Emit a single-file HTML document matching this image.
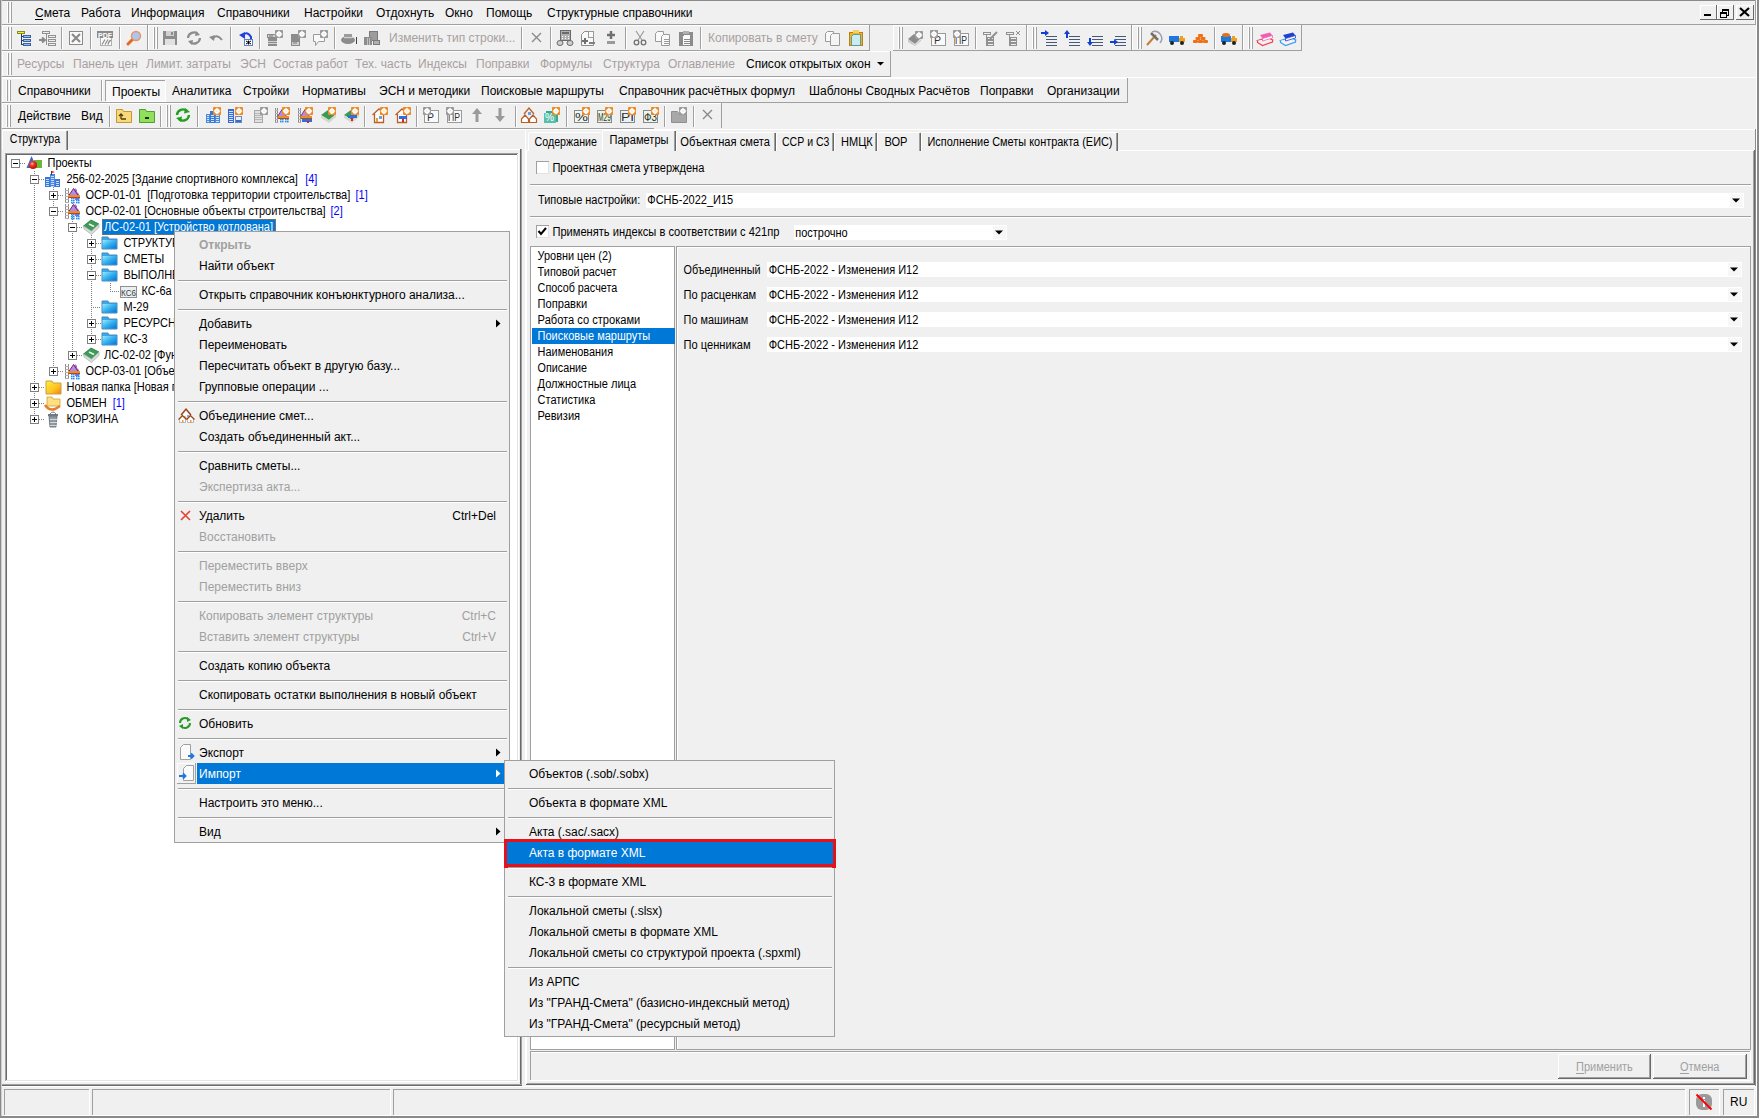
<!DOCTYPE html>
<html><head><meta charset="utf-8"><title>Smeta</title>
<style>html,body{margin:0;padding:0;background:#f0f0f0;overflow:hidden;width:1759px;height:1118px}svg{display:block;font-family:"Liberation Sans",sans-serif}text{white-space:pre}</style>
</head><body><svg width="1759" height="1118" viewBox="0 0 1759 1118"><defs><linearGradient id="gblue" x1="0" y1="0" x2="1" y2="1"><stop offset="0" stop-color="#9ee8ff"/><stop offset="0.5" stop-color="#30b0f0"/><stop offset="1" stop-color="#1070d0"/></linearGradient><linearGradient id="gyel" x1="0" y1="0" x2="1" y2="1"><stop offset="0" stop-color="#fff040"/><stop offset="0.6" stop-color="#ffc020"/><stop offset="1" stop-color="#f08010"/></linearGradient><radialGradient id="gred" cx="0.4" cy="0.35" r="0.7"><stop offset="0" stop-color="#ffb0a0"/><stop offset="0.4" stop-color="#f03020"/><stop offset="1" stop-color="#b01008"/></radialGradient></defs>
<rect x="0" y="0" width="1759" height="1118" fill="#f0f0f0" />
<rect x="0" y="0" width="1759" height="1" fill="#8a8a8a"/>
<rect x="0" y="0" width="1" height="1118" fill="#8a8a8a"/>
<rect x="1" y="0" width="1" height="1118" fill="#cfcfcf"/>
<rect x="1757" y="0" width="2" height="1118" fill="#8a8a8a"/>
<rect x="1756" y="0" width="1" height="1118" fill="#ffffff"/>
<rect x="0" y="1116" width="1759" height="2" fill="#8a8a8a"/>
<rect x="2" y="24" width="1754" height="1" fill="#a0a0a0"/>
<rect x="1755" y="0" width="1" height="25" fill="#a0a0a0"/>
<rect x="7" y="2" width="1" height="21" fill="#ffffff"/>
<rect x="10" y="2" width="1" height="21" fill="#ffffff"/>
<rect x="8" y="2" width="1" height="21" fill="#a0a0a0"/>
<rect x="11" y="2" width="1" height="21" fill="#a0a0a0"/>
<text x="35" y="17" font-size="12" fill="#000">Смета</text>
<text x="81" y="17" font-size="12" fill="#000">Работа</text>
<text x="131" y="17" font-size="12" fill="#000">Информация</text>
<text x="217" y="17" font-size="12" fill="#000">Справочники</text>
<text x="304" y="17" font-size="12" fill="#000">Настройки</text>
<text x="376" y="17" font-size="12" fill="#000">Отдохнуть</text>
<text x="445" y="17" font-size="12" fill="#000">Окно</text>
<text x="486" y="17" font-size="12" fill="#000">Помощь</text>
<text x="547" y="17" font-size="12" fill="#000">Структурные справочники</text>
<rect x="35" y="19" width="8" height="1" fill="#000"/>
<rect x="1700" y="5" width="17" height="1" fill="#ffffff"/>
<rect x="1700" y="5" width="1" height="15" fill="#ffffff"/>
<rect x="1700" y="19" width="17" height="1" fill="#696969"/>
<rect x="1716" y="5" width="1" height="15" fill="#696969"/>
<rect x="1717" y="5" width="17" height="1" fill="#ffffff"/>
<rect x="1717" y="5" width="1" height="15" fill="#ffffff"/>
<rect x="1717" y="19" width="17" height="1" fill="#696969"/>
<rect x="1733" y="5" width="1" height="15" fill="#696969"/>
<rect x="1736" y="5" width="18" height="1" fill="#ffffff"/>
<rect x="1736" y="5" width="1" height="15" fill="#ffffff"/>
<rect x="1736" y="19" width="18" height="1" fill="#696969"/>
<rect x="1753" y="5" width="1" height="15" fill="#696969"/>
<rect x="1704" y="14" width="7" height="2" fill="#000" />
<rect x="1722" y="9" width="7" height="1" fill="#000"/>
<rect x="1722" y="15" width="7" height="1" fill="#000"/>
<rect x="1722" y="9" width="1" height="7" fill="#000"/>
<rect x="1728" y="9" width="1" height="7" fill="#000"/>
<rect x="1722" y="10" width="7" height="1" fill="#000"/>
<rect x="1720" y="12" width="6" height="6" fill="#f0f0f0" />
<rect x="1720" y="12" width="7" height="1" fill="#000"/>
<rect x="1720" y="17" width="7" height="1" fill="#000"/>
<rect x="1720" y="12" width="1" height="6" fill="#000"/>
<rect x="1726" y="12" width="1" height="6" fill="#000"/>
<rect x="1720" y="13" width="7" height="1" fill="#000"/>
<path d="M1740 8 L1749 16 M1749 8 L1740 16" stroke="#000" stroke-width="2.2"/>
<rect x="2" y="25" width="146" height="1" fill="#ffffff"/>
<rect x="2" y="25" width="1" height="26" fill="#ffffff"/>
<rect x="2" y="50" width="146" height="1" fill="#a0a0a0"/>
<rect x="147" y="25" width="1" height="26" fill="#a0a0a0"/>
<rect x="7" y="27" width="1" height="22" fill="#ffffff"/>
<rect x="10" y="27" width="1" height="22" fill="#ffffff"/>
<rect x="8" y="27" width="1" height="22" fill="#a0a0a0"/>
<rect x="11" y="27" width="1" height="22" fill="#a0a0a0"/>
<rect x="61" y="27" width="1" height="22" fill="#a0a0a0"/>
<rect x="62" y="27" width="1" height="22" fill="#ffffff"/>
<rect x="90" y="27" width="1" height="22" fill="#a0a0a0"/>
<rect x="91" y="27" width="1" height="22" fill="#ffffff"/>
<rect x="119" y="27" width="1" height="22" fill="#a0a0a0"/>
<rect x="120" y="27" width="1" height="22" fill="#ffffff"/>
<rect x="148" y="25" width="722" height="1" fill="#ffffff"/>
<rect x="148" y="25" width="1" height="26" fill="#ffffff"/>
<rect x="148" y="50" width="722" height="1" fill="#a0a0a0"/>
<rect x="869" y="25" width="1" height="26" fill="#a0a0a0"/>
<rect x="153" y="27" width="1" height="22" fill="#ffffff"/>
<rect x="156" y="27" width="1" height="22" fill="#ffffff"/>
<rect x="154" y="27" width="1" height="22" fill="#a0a0a0"/>
<rect x="157" y="27" width="1" height="22" fill="#a0a0a0"/>
<rect x="230" y="27" width="1" height="22" fill="#a0a0a0"/>
<rect x="231" y="27" width="1" height="22" fill="#ffffff"/>
<rect x="259" y="27" width="1" height="22" fill="#a0a0a0"/>
<rect x="260" y="27" width="1" height="22" fill="#ffffff"/>
<rect x="334" y="27" width="1" height="22" fill="#a0a0a0"/>
<rect x="335" y="27" width="1" height="22" fill="#ffffff"/>
<rect x="521" y="27" width="1" height="22" fill="#a0a0a0"/>
<rect x="522" y="27" width="1" height="22" fill="#ffffff"/>
<rect x="550" y="27" width="1" height="22" fill="#a0a0a0"/>
<rect x="551" y="27" width="1" height="22" fill="#ffffff"/>
<rect x="625" y="27" width="1" height="22" fill="#a0a0a0"/>
<rect x="626" y="27" width="1" height="22" fill="#ffffff"/>
<rect x="700" y="27" width="1" height="22" fill="#a0a0a0"/>
<rect x="701" y="27" width="1" height="22" fill="#ffffff"/>
<text x="389" y="42" font-size="12" fill="#a8a0a0">Изменить тип строки...</text>
<text x="708" y="42" font-size="12" fill="#a8a0a0">Копировать в смету</text>
<rect x="893" y="25" width="134" height="1" fill="#ffffff"/>
<rect x="893" y="25" width="1" height="26" fill="#ffffff"/>
<rect x="893" y="50" width="134" height="1" fill="#a0a0a0"/>
<rect x="1026" y="25" width="1" height="26" fill="#a0a0a0"/>
<rect x="898" y="27" width="1" height="22" fill="#ffffff"/>
<rect x="901" y="27" width="1" height="22" fill="#ffffff"/>
<rect x="899" y="27" width="1" height="22" fill="#a0a0a0"/>
<rect x="902" y="27" width="1" height="22" fill="#a0a0a0"/>
<rect x="975" y="27" width="1" height="22" fill="#a0a0a0"/>
<rect x="976" y="27" width="1" height="22" fill="#ffffff"/>
<rect x="1027" y="25" width="105" height="1" fill="#ffffff"/>
<rect x="1027" y="25" width="1" height="26" fill="#ffffff"/>
<rect x="1027" y="50" width="105" height="1" fill="#a0a0a0"/>
<rect x="1131" y="25" width="1" height="26" fill="#a0a0a0"/>
<rect x="1032" y="27" width="1" height="22" fill="#ffffff"/>
<rect x="1035" y="27" width="1" height="22" fill="#ffffff"/>
<rect x="1033" y="27" width="1" height="22" fill="#a0a0a0"/>
<rect x="1036" y="27" width="1" height="22" fill="#a0a0a0"/>
<rect x="1132" y="25" width="111" height="1" fill="#ffffff"/>
<rect x="1132" y="25" width="1" height="26" fill="#ffffff"/>
<rect x="1132" y="50" width="111" height="1" fill="#a0a0a0"/>
<rect x="1242" y="25" width="1" height="26" fill="#a0a0a0"/>
<rect x="1137" y="27" width="1" height="22" fill="#ffffff"/>
<rect x="1140" y="27" width="1" height="22" fill="#ffffff"/>
<rect x="1138" y="27" width="1" height="22" fill="#a0a0a0"/>
<rect x="1141" y="27" width="1" height="22" fill="#a0a0a0"/>
<rect x="1214" y="27" width="1" height="22" fill="#a0a0a0"/>
<rect x="1215" y="27" width="1" height="22" fill="#ffffff"/>
<rect x="1243" y="25" width="59" height="1" fill="#ffffff"/>
<rect x="1243" y="25" width="1" height="26" fill="#ffffff"/>
<rect x="1243" y="50" width="59" height="1" fill="#a0a0a0"/>
<rect x="1301" y="25" width="1" height="26" fill="#a0a0a0"/>
<rect x="1248" y="27" width="1" height="22" fill="#ffffff"/>
<rect x="1251" y="27" width="1" height="22" fill="#ffffff"/>
<rect x="1249" y="27" width="1" height="22" fill="#a0a0a0"/>
<rect x="1252" y="27" width="1" height="22" fill="#a0a0a0"/>
<rect x="2" y="77" width="1754" height="1" fill="#ffffff"/>
<rect x="2" y="51" width="889" height="1" fill="#ffffff"/>
<rect x="2" y="51" width="1" height="26" fill="#ffffff"/>
<rect x="2" y="76" width="889" height="1" fill="#a0a0a0"/>
<rect x="890" y="51" width="1" height="26" fill="#a0a0a0"/>
<rect x="7" y="53" width="1" height="22" fill="#ffffff"/>
<rect x="10" y="53" width="1" height="22" fill="#ffffff"/>
<rect x="8" y="53" width="1" height="22" fill="#a0a0a0"/>
<rect x="11" y="53" width="1" height="22" fill="#a0a0a0"/>
<text x="17" y="68" font-size="12" fill="#a8a0a0">Ресурсы</text>
<text x="73" y="68" font-size="12" fill="#a8a0a0">Панель цен</text>
<text x="146" y="68" font-size="12" fill="#a8a0a0">Лимит. затраты</text>
<text x="240" y="68" font-size="12" fill="#a8a0a0">ЭСН</text>
<text x="273" y="68" font-size="12" fill="#a8a0a0">Состав работ</text>
<text x="355" y="68" font-size="12" fill="#a8a0a0">Тех. часть</text>
<text x="418" y="68" font-size="12" fill="#a8a0a0">Индексы</text>
<text x="476" y="68" font-size="12" fill="#a8a0a0">Поправки</text>
<text x="540" y="68" font-size="12" fill="#a8a0a0">Формулы</text>
<text x="603" y="68" font-size="12" fill="#a8a0a0">Структура</text>
<text x="668" y="68" font-size="12" fill="#a8a0a0">Оглавление</text>
<text x="746" y="68" font-size="12" fill="#000">Список открытых окон</text>
<path d="M877 62 L884 62 L880.5 65.5 Z" fill="#000"/>
<rect x="2" y="78" width="1126" height="1" fill="#ffffff"/>
<rect x="2" y="78" width="1" height="25" fill="#ffffff"/>
<rect x="2" y="102" width="1126" height="1" fill="#a0a0a0"/>
<rect x="1127" y="78" width="1" height="25" fill="#a0a0a0"/>
<rect x="6" y="80" width="1" height="21" fill="#ffffff"/>
<rect x="9" y="80" width="1" height="21" fill="#ffffff"/>
<rect x="7" y="80" width="1" height="21" fill="#a0a0a0"/>
<rect x="10" y="80" width="1" height="21" fill="#a0a0a0"/>
<text x="18" y="95" font-size="12" fill="#000">Справочники</text>
<rect x="101" y="80" width="1" height="21" fill="#a0a0a0"/>
<rect x="102" y="80" width="1" height="21" fill="#ffffff"/>
<rect x="106" y="80" width="59" height="21" fill="#f7f7f7" />
<rect x="105" y="80" width="61" height="1" fill="#a0a0a0"/>
<rect x="105" y="80" width="1" height="22" fill="#a0a0a0"/>
<rect x="105" y="101" width="61" height="1" fill="#ffffff"/>
<rect x="165" y="80" width="1" height="22" fill="#ffffff"/>
<text x="112" y="96" font-size="12" fill="#000">Проекты</text>
<text x="172" y="95" font-size="12" fill="#000">Аналитика</text>
<text x="243" y="95" font-size="12" fill="#000">Стройки</text>
<text x="302" y="95" font-size="12" fill="#000">Нормативы</text>
<text x="379" y="95" font-size="12" fill="#000">ЭСН и методики</text>
<text x="481" y="95" font-size="12" fill="#000">Поисковые маршруты</text>
<text x="619" y="95" font-size="12" fill="#000">Справочник расчётных формул</text>
<text x="809" y="95" font-size="12" fill="#000">Шаблоны Сводных Расчётов</text>
<text x="980" y="95" font-size="12" fill="#000">Поправки</text>
<text x="1047" y="95" font-size="12" fill="#000">Организации</text>
<rect x="2" y="129" width="1754" height="1" fill="#ffffff"/>
<rect x="2" y="103" width="720" height="1" fill="#ffffff"/>
<rect x="2" y="103" width="1" height="26" fill="#ffffff"/>
<rect x="721" y="103" width="1" height="25" fill="#a0a0a0"/>
<rect x="2" y="128" width="652" height="1" fill="#a0a0a0"/>
<rect x="6" y="105" width="1" height="22" fill="#ffffff"/>
<rect x="9" y="105" width="1" height="22" fill="#ffffff"/>
<rect x="7" y="105" width="1" height="22" fill="#a0a0a0"/>
<rect x="10" y="105" width="1" height="22" fill="#a0a0a0"/>
<text x="18" y="120" font-size="12" fill="#000">Действие</text>
<text x="81" y="120" font-size="12" fill="#000">Вид</text>
<rect x="109" y="106" width="1" height="21" fill="#a0a0a0"/>
<rect x="110" y="106" width="1" height="21" fill="#ffffff"/>
<rect x="160" y="106" width="1" height="21" fill="#a0a0a0"/>
<rect x="161" y="106" width="1" height="21" fill="#ffffff"/>
<rect x="197" y="106" width="1" height="21" fill="#a0a0a0"/>
<rect x="198" y="106" width="1" height="21" fill="#ffffff"/>
<rect x="364" y="106" width="1" height="21" fill="#a0a0a0"/>
<rect x="365" y="106" width="1" height="21" fill="#ffffff"/>
<rect x="416" y="106" width="1" height="21" fill="#a0a0a0"/>
<rect x="417" y="106" width="1" height="21" fill="#ffffff"/>
<rect x="515" y="106" width="1" height="21" fill="#a0a0a0"/>
<rect x="516" y="106" width="1" height="21" fill="#ffffff"/>
<rect x="566" y="106" width="1" height="21" fill="#a0a0a0"/>
<rect x="567" y="106" width="1" height="21" fill="#ffffff"/>
<rect x="664" y="106" width="1" height="21" fill="#a0a0a0"/>
<rect x="665" y="106" width="1" height="21" fill="#ffffff"/>
<rect x="693" y="106" width="1" height="21" fill="#a0a0a0"/>
<rect x="694" y="106" width="1" height="21" fill="#ffffff"/>
<rect x="166" y="105" width="1" height="22" fill="#ffffff"/>
<rect x="169" y="105" width="1" height="22" fill="#ffffff"/>
<rect x="167" y="105" width="1" height="22" fill="#a0a0a0"/>
<rect x="170" y="105" width="1" height="22" fill="#a0a0a0"/>
<rect x="17" y="31" width="8" height="3" fill="#f0f020" />
<rect x="17" y="31" width="8" height="1" fill="#8a8a20"/>
<rect x="17" y="33" width="8" height="1" fill="#8a8a20"/>
<rect x="17" y="31" width="1" height="3" fill="#8a8a20"/>
<rect x="24" y="31" width="1" height="3" fill="#8a8a20"/>
<rect x="21" y="34" width="1" height="11" fill="#203c70"/>
<rect x="21" y="36" width="3" height="1" fill="#203c70"/>
<rect x="23" y="35" width="8" height="3" fill="#90c0f0" />
<rect x="23" y="35" width="8" height="1" fill="#4060a0"/>
<rect x="23" y="37" width="8" height="1" fill="#4060a0"/>
<rect x="23" y="35" width="1" height="3" fill="#4060a0"/>
<rect x="30" y="35" width="1" height="3" fill="#4060a0"/>
<rect x="21" y="40" width="3" height="1" fill="#203c70"/>
<rect x="23" y="39" width="8" height="3" fill="#90c0f0" />
<rect x="23" y="39" width="8" height="1" fill="#4060a0"/>
<rect x="23" y="41" width="8" height="1" fill="#4060a0"/>
<rect x="23" y="39" width="1" height="3" fill="#4060a0"/>
<rect x="30" y="39" width="1" height="3" fill="#4060a0"/>
<rect x="21" y="44" width="3" height="1" fill="#203c70"/>
<rect x="23" y="43" width="8" height="3" fill="#90c0f0" />
<rect x="23" y="43" width="8" height="1" fill="#4060a0"/>
<rect x="23" y="45" width="8" height="1" fill="#4060a0"/>
<rect x="23" y="43" width="1" height="3" fill="#4060a0"/>
<rect x="30" y="43" width="1" height="3" fill="#4060a0"/>
<rect x="42" y="31" width="8" height="1" fill="#909090"/>
<rect x="42" y="33" width="8" height="1" fill="#909090"/>
<rect x="42" y="31" width="1" height="3" fill="#909090"/>
<rect x="49" y="31" width="1" height="3" fill="#909090"/>
<rect x="46" y="34" width="1" height="11" fill="#909090"/>
<rect x="48" y="35" width="8" height="1" fill="#909090"/>
<rect x="48" y="37" width="8" height="1" fill="#909090"/>
<rect x="48" y="35" width="1" height="3" fill="#909090"/>
<rect x="55" y="35" width="1" height="3" fill="#909090"/>
<rect x="48" y="39" width="8" height="1" fill="#909090"/>
<rect x="48" y="41" width="8" height="1" fill="#909090"/>
<rect x="48" y="39" width="1" height="3" fill="#909090"/>
<rect x="55" y="39" width="1" height="3" fill="#909090"/>
<rect x="48" y="43" width="8" height="1" fill="#909090"/>
<rect x="48" y="45" width="8" height="1" fill="#909090"/>
<rect x="48" y="43" width="1" height="3" fill="#909090"/>
<rect x="55" y="43" width="1" height="3" fill="#909090"/>
<path d="M39 40 h5 M42 37.5 l3 2.5 l-3 2.5" fill="none" stroke="#8a8a8a" stroke-width="2" />
<rect x="69" y="31" width="14" height="1" fill="#8a8a8a"/>
<rect x="69" y="44" width="14" height="1" fill="#8a8a8a"/>
<rect x="69" y="31" width="1" height="14" fill="#8a8a8a"/>
<rect x="82" y="31" width="1" height="14" fill="#8a8a8a"/>
<rect x="70" y="32" width="12" height="12" fill="#fafafa" />
<path d="M72 34 L80 42 M80 34 L72 42" fill="none" stroke="#8a8a8a" stroke-width="2.2" />
<rect x="100" y="37" width="12" height="9" fill="#fafafa" />
<rect x="100" y="37" width="12" height="1" fill="#b0b0b0"/>
<rect x="100" y="45" width="12" height="1" fill="#b0b0b0"/>
<rect x="100" y="37" width="1" height="9" fill="#b0b0b0"/>
<rect x="111" y="37" width="1" height="9" fill="#b0b0b0"/>
<rect x="97" y="31" width="16" height="7" fill="#8a8a8a" />
<text x="98" y="37.5" font-size="7.5" fill="#ffffff" font-weight="bold" textLength="14.0" lengthAdjust="spacingAndGlyphs">PDF</text>
<path d="M102 44.5 l3 -5 M105 44.5 l3 -5 M108 44.5 q1 -4 3 -4" fill="none" stroke="#909090" stroke-width="1.3" />
<path d="M128 44 L133 39" fill="none" stroke="#e06a20" stroke-width="3" stroke-linecap="round"/>
<circle cx="136" cy="36" r="4.5" fill="#a8c8f0" stroke="#f09060" stroke-width="1.4"/>
<rect x="163" y="31" width="14" height="14" fill="#8c8c8c" />
<rect x="166" y="31" width="8" height="5" fill="#d0d0d0" />
<rect x="171" y="32" width="2" height="3" fill="#8c8c8c" />
<rect x="165" y="39" width="10" height="6" fill="#e0e0e0" />
<path d="M188 38 a6 6 0 0 1 10 -4 M200 38 a6 6 0 0 1 -10 4" fill="none" stroke="#8c8c8c" stroke-width="2.2" />
<path d="M196 31 L200 35 L195 36 Z M192 45 L188 41 L193 40 Z" fill="#8c8c8c" stroke="none" stroke-width="1" />
<path d="M212 39 q5 -6 10 1" fill="none" stroke="#8c8c8c" stroke-width="2" />
<path d="M209 37 L215 35 L214 41 Z" fill="#8c8c8c" stroke="none" stroke-width="1" />
<path d="M242 36 q5 -6 9 1 v3" fill="none" stroke="#2040e0" stroke-width="2" />
<path d="M239 35 L245 32 L245 39 Z" fill="#2040e0" stroke="none" stroke-width="1" />
<rect x="244" y="39" width="9" height="7" fill="#fff" />
<rect x="244" y="39" width="9" height="1" fill="#6080c0"/>
<rect x="244" y="45" width="9" height="1" fill="#6080c0"/>
<rect x="244" y="39" width="1" height="7" fill="#6080c0"/>
<rect x="252" y="39" width="1" height="7" fill="#6080c0"/>
<path d="M246 41 l5 3 M251 41 l-5 3 M248.5 40.5 v4" fill="none" stroke="#000" stroke-width="1" />
<rect x="268" y="34" width="10" height="4" fill="#d0d0d0" />
<rect x="267" y="34" width="11" height="1" fill="#8a8a8a"/>
<rect x="267" y="37" width="11" height="1" fill="#8a8a8a"/>
<rect x="267" y="34" width="1" height="4" fill="#8a8a8a"/>
<rect x="277" y="34" width="1" height="4" fill="#8a8a8a"/>
<path d="M269 36 h4" fill="none" stroke="#606060" stroke-width="0.8" />
<rect x="268" y="38" width="9" height="8" fill="#8c8c8c" />
<rect x="268" y="41" width="9" height="1" fill="#d0d0d0"/>
<rect x="268" y="43" width="9" height="1" fill="#d0d0d0"/>
<rect x="275" y="30" width="8" height="8" rx="0.8" fill="#9a9a9a"/>
<circle cx="279" cy="34" r="2.6" fill="#ffffff"/>
<circle cx="279" cy="34" r="1.1" fill="#9a9a9a"/>
<path d="M279 30.8 v6.4 M275.8 34 h6.4" stroke="#ffffff" stroke-width="1.2"/>
<rect x="291" y="34" width="10" height="4" fill="#8c8c8c" />
<rect x="291" y="38" width="9" height="3" fill="#8c8c8c" />
<rect x="291" y="41" width="9" height="5" fill="#d0d0d0" />
<rect x="291" y="41" width="9" height="1" fill="#8a8a8a"/>
<rect x="291" y="45" width="9" height="1" fill="#8a8a8a"/>
<rect x="291" y="41" width="1" height="5" fill="#8a8a8a"/>
<rect x="299" y="41" width="1" height="5" fill="#8a8a8a"/>
<path d="M293 43 h4" fill="none" stroke="#606060" stroke-width="0.8" />
<rect x="298" y="30" width="8" height="8" rx="0.8" fill="#9a9a9a"/>
<circle cx="302" cy="34" r="2.6" fill="#ffffff"/>
<circle cx="302" cy="34" r="1.1" fill="#9a9a9a"/>
<path d="M302 30.8 v6.4 M298.8 34 h6.4" stroke="#ffffff" stroke-width="1.2"/>
<path d="M313.5 34.5 h11 v7 h-6 l-3 4 v-4 h-2 z" fill="#f8f8f8" stroke="#9a9a9a" stroke-width="1" />
<rect x="320" y="30" width="8" height="8" rx="0.8" fill="#9a9a9a"/>
<circle cx="324" cy="34" r="2.6" fill="#ffffff"/>
<circle cx="324" cy="34" r="1.1" fill="#9a9a9a"/>
<path d="M324 30.8 v6.4 M320.8 34 h6.4" stroke="#ffffff" stroke-width="1.2"/>
<ellipse cx="348" cy="40" rx="7" ry="4" fill="#8c8c8c"/>
<rect x="344" y="34" width="8" height="5" fill="#9c9c9c" />
<rect x="344" y="37" width="9" height="1" fill="#d0d0d0"/>
<rect x="356" y="37" width="1" height="7" fill="#404040"/>
<rect x="369" y="31" width="9" height="10" fill="#9c9c9c" />
<rect x="369" y="31" width="9" height="1" fill="#7a7a7a"/>
<rect x="369" y="40" width="9" height="1" fill="#7a7a7a"/>
<rect x="369" y="31" width="1" height="10" fill="#7a7a7a"/>
<rect x="377" y="31" width="1" height="10" fill="#7a7a7a"/>
<rect x="364" y="37" width="8" height="8" fill="#8c8c8c" />
<rect x="367" y="38" width="1" height="7" fill="#c0c0c0"/>
<rect x="369" y="38" width="1" height="7" fill="#c0c0c0"/>
<rect x="373" y="40" width="7" height="5" fill="#b0b0b0" />
<rect x="373" y="40" width="7" height="1" fill="#7a7a7a"/>
<rect x="373" y="44" width="7" height="1" fill="#7a7a7a"/>
<rect x="373" y="40" width="1" height="5" fill="#7a7a7a"/>
<rect x="379" y="40" width="1" height="5" fill="#7a7a7a"/>
<path d="M532 33 L541 42 M541 33 L532 42" fill="none" stroke="#8a8a8a" stroke-width="1.4" />
<rect x="560" y="30" width="11" height="11" fill="#b0b0b0" />
<rect x="560" y="30" width="11" height="1" fill="#6a6a6a"/>
<rect x="560" y="40" width="11" height="1" fill="#6a6a6a"/>
<rect x="560" y="30" width="1" height="11" fill="#6a6a6a"/>
<rect x="570" y="30" width="1" height="11" fill="#6a6a6a"/>
<rect x="562" y="32" width="7" height="2" fill="#6a6a6a" />
<rect x="562" y="36" width="1" height="1" fill="#fff" />
<rect x="565" y="36" width="1" height="1" fill="#fff" />
<rect x="568" y="36" width="1" height="1" fill="#fff" />
<rect x="562" y="38" width="1" height="1" fill="#fff" />
<rect x="565" y="38" width="1" height="1" fill="#fff" />
<rect x="568" y="38" width="1" height="1" fill="#fff" />
<ellipse cx="560" cy="43" rx="3" ry="2.5" fill="#d0d0d0" stroke="#6a6a6a"/>
<ellipse cx="570" cy="43" rx="3" ry="2.5" fill="#d0d0d0" stroke="#6a6a6a"/>
<path d="M581.5 34.5 l3 -3 h9 v14 h-12 z" fill="#f8f8f8" stroke="#8a8a8a" stroke-width="1" />
<rect x="588" y="31" width="6" height="7" fill="#fafafa" />
<rect x="588" y="31" width="6" height="1" fill="#9a9a9a"/>
<rect x="588" y="37" width="6" height="1" fill="#9a9a9a"/>
<rect x="588" y="31" width="1" height="7" fill="#9a9a9a"/>
<rect x="593" y="31" width="1" height="7" fill="#9a9a9a"/>
<path d="M582 41 h6 M585 38 v6" fill="none" stroke="#707070" stroke-width="2" />
<rect x="589" y="42" width="6" height="2" fill="#808080"/>
<path d="M607 35 h8 M611 31 v8" fill="none" stroke="#707070" stroke-width="2.5" />
<rect x="607" y="41" width="8" height="3" fill="#9a9a9a" />
<path d="M636 31 L642 40 M644 31 L638 40" fill="none" stroke="#9a9a9a" stroke-width="1.2" />
<circle cx="636.5" cy="42.5" r="2.3" fill="none" stroke="#707070" stroke-width="1.3"/>
<circle cx="643.5" cy="42.5" r="2.3" fill="none" stroke="#707070" stroke-width="1.3"/>
<path d="M655.5 33.5 l2 -2 h6 v10 h-8 z" fill="#fafafa" stroke="#9a9a9a" stroke-width="1" />
<path d="M661.5 36.5 l2 -2 h6 v11 h-8 z" fill="#fafafa" stroke="#9a9a9a" stroke-width="1" />
<rect x="664" y="39" width="5" height="1" fill="#9a9a9a"/>
<rect x="664" y="41" width="5" height="1" fill="#9a9a9a"/>
<rect x="664" y="43" width="5" height="1" fill="#9a9a9a"/>
<rect x="679" y="32" width="14" height="14" fill="#8c8c8c" />
<rect x="683" y="31" width="6" height="3" fill="#b0b0b0" />
<path d="M682.5 36.5 l2 -2 h6 v11 h-8 z" fill="#fafafa" stroke="#8a8a8a" stroke-width="1" />
<rect x="684" y="39" width="6" height="1" fill="#8a8a8a"/>
<rect x="684" y="41" width="6" height="1" fill="#8a8a8a"/>
<rect x="684" y="43" width="6" height="1" fill="#8a8a8a"/>
<path d="M825.5 33.5 l2 -2 h6 v10 h-8 z" fill="#fafafa" stroke="#9a9a9a" stroke-width="1" />
<path d="M830.5 35.5 l2 -2 h7 v12 h-9 z" fill="#f4f4f4" stroke="#9a9a9a" stroke-width="1" />
<rect x="849" y="32" width="14" height="14" fill="#f0b020" />
<rect x="849" y="32" width="14" height="1" fill="#c08010"/>
<rect x="849" y="45" width="14" height="1" fill="#c08010"/>
<rect x="849" y="32" width="1" height="14" fill="#c08010"/>
<rect x="862" y="32" width="1" height="14" fill="#c08010"/>
<rect x="853" y="30" width="6" height="3" fill="#f8d060" />
<path d="M851.5 36.5 l2 -2 h7 v11 h-9 z" fill="#c8ecf0" stroke="#5a9aa0" stroke-width="1" />
<path d="M908 39 L914 34 L921 38 L915 44 Z" fill="#8c8c8c" stroke="none" stroke-width="1" />
<path d="M908 39 v3 l7 4 l6 -5 v-2 l-6 6 z" fill="#c8c8c8" stroke="none" stroke-width="1" />
<rect x="915" y="31" width="8" height="8" rx="0.8" fill="#9a9a9a"/>
<circle cx="919" cy="35" r="2.6" fill="#ffffff"/>
<circle cx="919" cy="35" r="1.1" fill="#9a9a9a"/>
<path d="M919 31.8 v6.4 M915.8 35 h6.4" stroke="#ffffff" stroke-width="1.2"/>
<rect x="931" y="33" width="14" height="12" fill="#fafafa" />
<rect x="931" y="33" width="15" height="1" fill="#9a9a9a"/>
<rect x="931" y="45" width="15" height="1" fill="#9a9a9a"/>
<rect x="931" y="33" width="1" height="13" fill="#9a9a9a"/>
<rect x="945" y="33" width="1" height="13" fill="#9a9a9a"/>
<text x="934" y="44" font-size="10" fill="#303030" textLength="7.0" lengthAdjust="spacingAndGlyphs">P</text>
<rect x="930" y="30" width="8" height="8" rx="0.8" fill="#9a9a9a"/>
<circle cx="934" cy="34" r="2.6" fill="#ffffff"/>
<circle cx="934" cy="34" r="1.1" fill="#9a9a9a"/>
<path d="M934 30.8 v6.4 M930.8 34 h6.4" stroke="#ffffff" stroke-width="1.2"/>
<rect x="954" y="33" width="14" height="12" fill="#fafafa" />
<rect x="954" y="33" width="15" height="1" fill="#9a9a9a"/>
<rect x="954" y="45" width="15" height="1" fill="#9a9a9a"/>
<rect x="954" y="33" width="1" height="13" fill="#9a9a9a"/>
<rect x="968" y="33" width="1" height="13" fill="#9a9a9a"/>
<text x="955" y="44" font-size="10" fill="#303030" textLength="12.0" lengthAdjust="spacingAndGlyphs">ПР</text>
<rect x="953" y="30" width="8" height="8" rx="0.8" fill="#9a9a9a"/>
<circle cx="957" cy="34" r="2.6" fill="#ffffff"/>
<circle cx="957" cy="34" r="1.1" fill="#9a9a9a"/>
<path d="M957 30.8 v6.4 M953.8 34 h6.4" stroke="#ffffff" stroke-width="1.2"/>
<rect x="983" y="32" width="8" height="1" fill="#909090"/>
<rect x="983" y="34" width="8" height="1" fill="#909090"/>
<rect x="983" y="32" width="1" height="3" fill="#909090"/>
<rect x="990" y="32" width="1" height="3" fill="#909090"/>
<rect x="986" y="35" width="1" height="11" fill="#909090"/>
<rect x="987" y="37" width="7" height="1" fill="#909090"/>
<rect x="987" y="39" width="7" height="1" fill="#909090"/>
<rect x="987" y="37" width="1" height="3" fill="#909090"/>
<rect x="993" y="37" width="1" height="3" fill="#909090"/>
<rect x="987" y="40" width="7" height="1" fill="#909090"/>
<rect x="987" y="42" width="7" height="1" fill="#909090"/>
<rect x="987" y="40" width="1" height="3" fill="#909090"/>
<rect x="993" y="40" width="1" height="3" fill="#909090"/>
<rect x="987" y="43" width="7" height="1" fill="#909090"/>
<rect x="987" y="45" width="7" height="1" fill="#909090"/>
<rect x="987" y="43" width="1" height="3" fill="#909090"/>
<rect x="993" y="43" width="1" height="3" fill="#909090"/>
<path d="M990 39 L997 32" fill="none" stroke="#909090" stroke-width="2" />
<rect x="1006" y="32" width="8" height="1" fill="#909090"/>
<rect x="1006" y="34" width="8" height="1" fill="#909090"/>
<rect x="1006" y="32" width="1" height="3" fill="#909090"/>
<rect x="1013" y="32" width="1" height="3" fill="#909090"/>
<rect x="1009" y="35" width="1" height="11" fill="#909090"/>
<rect x="1010" y="37" width="7" height="1" fill="#909090"/>
<rect x="1010" y="39" width="7" height="1" fill="#909090"/>
<rect x="1010" y="37" width="1" height="3" fill="#909090"/>
<rect x="1016" y="37" width="1" height="3" fill="#909090"/>
<rect x="1010" y="40" width="7" height="1" fill="#909090"/>
<rect x="1010" y="42" width="7" height="1" fill="#909090"/>
<rect x="1010" y="40" width="1" height="3" fill="#909090"/>
<rect x="1016" y="40" width="1" height="3" fill="#909090"/>
<rect x="1010" y="43" width="7" height="1" fill="#909090"/>
<rect x="1010" y="45" width="7" height="1" fill="#909090"/>
<rect x="1010" y="43" width="1" height="3" fill="#909090"/>
<rect x="1016" y="43" width="1" height="3" fill="#909090"/>
<path d="M1016 31 l4 4 M1020 31 l-4 4" fill="none" stroke="#909090" stroke-width="1" />
<rect x="1046" y="36" width="11" height="1" fill="#485878"/>
<rect x="1046" y="39" width="11" height="1" fill="#485878"/>
<rect x="1046" y="42" width="11" height="1" fill="#485878"/>
<rect x="1046" y="45" width="11" height="1" fill="#485878"/>
<path d="M1041 33 h5" fill="none" stroke="#1040d0" stroke-width="2" />
<path d="M1045 30 L1049 33 L1045 36 Z" fill="#1040d0" stroke="none" stroke-width="1" />
<rect x="1069" y="36" width="11" height="1" fill="#485878"/>
<rect x="1069" y="39" width="11" height="1" fill="#485878"/>
<rect x="1069" y="42" width="11" height="1" fill="#485878"/>
<rect x="1069" y="45" width="11" height="1" fill="#485878"/>
<path d="M1067 38 v-5" fill="none" stroke="#1040d0" stroke-width="2" />
<path d="M1064 34 L1067 30 L1070 34 Z" fill="#1040d0" stroke="none" stroke-width="1" />
<rect x="1092" y="36" width="11" height="1" fill="#485878"/>
<rect x="1092" y="39" width="11" height="1" fill="#485878"/>
<rect x="1092" y="42" width="11" height="1" fill="#485878"/>
<rect x="1092" y="45" width="11" height="1" fill="#485878"/>
<path d="M1090 38 v5" fill="none" stroke="#1040d0" stroke-width="2" />
<path d="M1087 42 L1090 46 L1093 42 Z" fill="#1040d0" stroke="none" stroke-width="1" />
<rect x="1115" y="36" width="11" height="1" fill="#485878"/>
<rect x="1115" y="39" width="11" height="1" fill="#485878"/>
<rect x="1115" y="42" width="11" height="1" fill="#485878"/>
<rect x="1115" y="45" width="11" height="1" fill="#485878"/>
<path d="M1110 42 h5" fill="none" stroke="#1040d0" stroke-width="2" />
<path d="M1114 39 L1118 42 L1114 45 Z" fill="#1040d0" stroke="none" stroke-width="1" />
<path d="M1147 45 L1156 35" fill="none" stroke="#c08030" stroke-width="2" />
<path d="M1151 33 L1158 40" fill="none" stroke="#707070" stroke-width="2.5" />
<path d="M1152 32 a7 7 0 0 1 8 11" fill="none" stroke="#9aa0b0" stroke-width="1.5" />
<rect x="1169" y="36" width="10" height="6" fill="#1e78e0" />
<rect x="1179" y="38" width="6" height="4" fill="#f0a020" />
<rect x="1180" y="36" width="3" height="3" fill="#f0a020" />
<circle cx="1172" cy="43" r="2" fill="#202020"/><circle cx="1182" cy="43" r="2" fill="#202020"/>
<rect x="1193" y="40" width="5" height="3" rx="1" fill="#f07018"/>
<rect x="1198" y="40" width="5" height="3" rx="1" fill="#f07018"/>
<rect x="1203" y="40" width="5" height="3" rx="1" fill="#f07018"/>
<rect x="1195.5" y="37" width="5" height="3" rx="1" fill="#f07018"/>
<rect x="1200.5" y="37" width="5" height="3" rx="1" fill="#f07018"/>
<rect x="1198" y="34" width="5" height="3" rx="1" fill="#f07018"/>
<rect x="1221" y="36" width="10" height="6" fill="#1e78e0" />
<rect x="1231" y="38" width="6" height="4" fill="#f0a020" />
<rect x="1232" y="36" width="3" height="3" fill="#f0a020" />
<circle cx="1224" cy="43" r="2" fill="#202020"/><circle cx="1234" cy="43" r="2" fill="#202020"/>
<ellipse cx="1226" cy="35" rx="4" ry="2" fill="#e07020"/>
<path d="M1257.5 40.5 L1268 37.5 L1272.5 40 L1262.5 43.5 Z" fill="#ffffff" stroke="#f04050" stroke-width="1.2" />
<path d="M1257.5 40.5 v2 l5 3 l10 -3.5 v-2" fill="#f8f0f0" stroke="#f04050" stroke-width="1.2" />
<path d="M1260 35 L1270 32.5 L1272.5 35.5 L1262.5 38.5 Z" fill="#f060b0" stroke="none" stroke-width="1" />
<path d="M1262.5 38.5 L1272.5 35.5 v2.5 L1262.5 41 Z" fill="#ffffff" stroke="#f060b0" stroke-width="0.8" />
<path d="M1280.5 40.5 L1291 37.5 L1295.5 40 L1285.5 43.5 Z" fill="#ffffff" stroke="#30a0f0" stroke-width="1.2" />
<path d="M1280.5 40.5 v2 l5 3 l10 -3.5 v-2" fill="#f8f0f0" stroke="#30a0f0" stroke-width="1.2" />
<path d="M1283 35 L1293 32.5 L1295.5 35.5 L1285.5 38.5 Z" fill="#2040d0" stroke="none" stroke-width="1" />
<path d="M1285.5 38.5 L1295.5 35.5 v2.5 L1285.5 41 Z" fill="#ffffff" stroke="#2040d0" stroke-width="0.8" />
<path d="M116.5 109.5 h6 l1 2 h8 v11 h-15 z" fill="#f8d878" stroke="#c09a30" stroke-width="1" />
<path d="M121 119 h5 M121 119 v-4 M119 116 l2 -2 l2 2" fill="none" stroke="#504010" stroke-width="1.3" />
<path d="M139.5 109.5 h6 l1 2 h8 v11 h-15 z" fill="#90e060" stroke="#50a030" stroke-width="1" />
<rect x="145" y="117" width="4" height="2" fill="#203010"/>
<path d="M177 115 a6 6 0 0 1 10 -4 M189 115 a6 6 0 0 1 -10 4" fill="none" stroke="#20a020" stroke-width="2.4" />
<path d="M185 108 L190 112 L184 113.5 Z M181 122 L176 118 L182 116.5 Z" fill="#20a020" stroke="none" stroke-width="1" />
<rect x="206" y="114" width="4" height="9" fill="#4a8ad8" />
<rect x="210" y="111" width="5" height="12" fill="#3a7ad0" />
<rect x="215" y="115" width="5" height="8" fill="#4a8ad8" />
<rect x="211" y="115" width="3" height="1" fill="#d0e4ff"/>
<rect x="207" y="115" width="2" height="1" fill="#d0e4ff"/>
<rect x="216" y="115" width="3" height="1" fill="#d0e4ff"/>
<rect x="211" y="117" width="3" height="1" fill="#d0e4ff"/>
<rect x="207" y="117" width="2" height="1" fill="#d0e4ff"/>
<rect x="216" y="117" width="3" height="1" fill="#d0e4ff"/>
<rect x="211" y="119" width="3" height="1" fill="#d0e4ff"/>
<rect x="207" y="119" width="2" height="1" fill="#d0e4ff"/>
<rect x="216" y="119" width="3" height="1" fill="#d0e4ff"/>
<rect x="211" y="121" width="3" height="1" fill="#d0e4ff"/>
<rect x="207" y="121" width="2" height="1" fill="#d0e4ff"/>
<rect x="216" y="121" width="3" height="1" fill="#d0e4ff"/>
<rect x="213" y="107" width="8" height="8" rx="0.8" fill="#f08a24"/>
<circle cx="217" cy="111" r="2.6" fill="#ffffff"/>
<circle cx="217" cy="111" r="1.1" fill="#f08a24"/>
<path d="M217 107.8 v6.4 M213.8 111 h6.4" stroke="#ffffff" stroke-width="1.2"/>
<rect x="228" y="109" width="6" height="14" fill="#3a6ad0" />
<rect x="229" y="111" width="4" height="1" fill="#d0e4ff"/>
<rect x="229" y="113" width="4" height="1" fill="#d0e4ff"/>
<rect x="229" y="115" width="4" height="1" fill="#d0e4ff"/>
<rect x="229" y="117" width="4" height="1" fill="#d0e4ff"/>
<rect x="229" y="119" width="4" height="1" fill="#d0e4ff"/>
<rect x="229" y="121" width="4" height="1" fill="#d0e4ff"/>
<rect x="235" y="116" width="7" height="7" fill="#e8eef8" />
<rect x="235" y="116" width="7" height="1" fill="#6a8ac0"/>
<rect x="235" y="122" width="7" height="1" fill="#6a8ac0"/>
<rect x="235" y="116" width="1" height="7" fill="#6a8ac0"/>
<rect x="241" y="116" width="1" height="7" fill="#6a8ac0"/>
<rect x="236" y="120" width="5" height="2" fill="#3a6ad0"/>
<rect x="235" y="107" width="8" height="8" rx="0.8" fill="#f08a24"/>
<circle cx="239" cy="111" r="2.6" fill="#ffffff"/>
<circle cx="239" cy="111" r="1.1" fill="#f08a24"/>
<path d="M239 107.8 v6.4 M235.8 111 h6.4" stroke="#ffffff" stroke-width="1.2"/>
<rect x="254" y="110" width="9" height="13" fill="#e0e0e0" />
<rect x="254" y="110" width="9" height="1" fill="#a8a8a8"/>
<rect x="254" y="122" width="9" height="1" fill="#a8a8a8"/>
<rect x="254" y="110" width="1" height="13" fill="#a8a8a8"/>
<rect x="262" y="110" width="1" height="13" fill="#a8a8a8"/>
<rect x="255" y="113" width="7" height="1" fill="#b8b8b8"/>
<rect x="255" y="115" width="7" height="1" fill="#b8b8b8"/>
<rect x="255" y="117" width="7" height="1" fill="#b8b8b8"/>
<rect x="255" y="119" width="7" height="1" fill="#b8b8b8"/>
<rect x="260" y="107" width="8" height="8" rx="0.8" fill="#9a9a9a"/>
<circle cx="264" cy="111" r="2.6" fill="#ffffff"/>
<circle cx="264" cy="111" r="1.1" fill="#9a9a9a"/>
<path d="M264 107.8 v6.4 M260.8 111 h6.4" stroke="#ffffff" stroke-width="1.2"/>
<rect x="275" y="108" width="1" height="15" fill="#8a8a8a"/>
<rect x="277" y="108" width="1" height="15" fill="#8a8a8a"/>
<rect x="275" y="110" width="3" height="1" fill="#b0b0b0"/>
<rect x="275" y="113" width="3" height="1" fill="#b0b0b0"/>
<rect x="275" y="116" width="3" height="1" fill="#b0b0b0"/>
<rect x="275" y="119" width="3" height="1" fill="#b0b0b0"/>
<rect x="275" y="122" width="3" height="1" fill="#b0b0b0"/>
<path d="M278 116 L282 110 L286 116 Z" fill="#b08af0" stroke="none" stroke-width="1" />
<path d="M277.5 116.5 L282 109.5 L286.5 116.5" fill="none" stroke="#7a2040" stroke-width="0.9" />
<rect x="278" y="116" width="11" height="2" fill="#f08a30" />
<rect x="278" y="118" width="11" height="1" fill="#b05010" />
<rect x="280" y="119" width="1.6" height="1.4" fill="#2a8af0" />
<rect x="282" y="119" width="1.6" height="1.4" fill="#2a8af0" />
<rect x="285" y="119" width="1.6" height="1.4" fill="#2a8af0" />
<rect x="287" y="119" width="1.6" height="1.4" fill="#2a8af0" />
<rect x="280" y="121" width="1.6" height="1.4" fill="#2a8af0" />
<rect x="282" y="121" width="1.6" height="1.4" fill="#2a8af0" />
<rect x="285" y="121" width="1.6" height="1.4" fill="#2a8af0" />
<rect x="287" y="121" width="1.6" height="1.4" fill="#2a8af0" />
<rect x="282" y="107" width="8" height="8" rx="0.8" fill="#f08a24"/>
<circle cx="286" cy="111" r="2.6" fill="#ffffff"/>
<circle cx="286" cy="111" r="1.1" fill="#f08a24"/>
<path d="M286 107.8 v6.4 M282.8 111 h6.4" stroke="#ffffff" stroke-width="1.2"/>
<rect x="298" y="108" width="1" height="15" fill="#8a8a8a"/>
<rect x="300" y="108" width="1" height="15" fill="#8a8a8a"/>
<rect x="298" y="110" width="3" height="1" fill="#b0b0b0"/>
<rect x="298" y="113" width="3" height="1" fill="#b0b0b0"/>
<rect x="298" y="116" width="3" height="1" fill="#b0b0b0"/>
<rect x="298" y="119" width="3" height="1" fill="#b0b0b0"/>
<rect x="298" y="122" width="3" height="1" fill="#b0b0b0"/>
<path d="M301 116 L305 110 L309 116 Z" fill="#b08af0" stroke="none" stroke-width="1" />
<path d="M300.5 116.5 L305 109.5 L309.5 116.5" fill="none" stroke="#7a2040" stroke-width="0.9" />
<rect x="301" y="116" width="11" height="2" fill="#f08a30" />
<rect x="301" y="118" width="11" height="1" fill="#b05010" />
<rect x="302" y="119" width="10" height="3" fill="#2a70e0" />
<path d="M308 121 v2" fill="none" stroke="#e02020" stroke-width="2" />
<rect x="305" y="107" width="8" height="8" rx="0.8" fill="#f08a24"/>
<circle cx="309" cy="111" r="2.6" fill="#ffffff"/>
<circle cx="309" cy="111" r="1.1" fill="#f08a24"/>
<path d="M309 107.8 v6.4 M305.8 111 h6.4" stroke="#ffffff" stroke-width="1.2"/>
<path d="M321 115 L328 110 L336 114 L329 120 Z" fill="#3a9a50" stroke="none" stroke-width="1" />
<path d="M321 115 L321 118 L329 123 L336 117 L336 114 L329 120 Z" fill="#d0d8d0" stroke="none" stroke-width="1" />
<rect x="328" y="107" width="8" height="8" rx="0.8" fill="#f08a24"/>
<circle cx="332" cy="111" r="2.6" fill="#ffffff"/>
<circle cx="332" cy="111" r="1.1" fill="#f08a24"/>
<path d="M332 107.8 v6.4 M328.8 111 h6.4" stroke="#ffffff" stroke-width="1.2"/>
<path d="M344 115 L351 110 L359 114 L352 120 Z" fill="#3a9a50" stroke="none" stroke-width="1" />
<path d="M344 115 L344 118 L352 123 L359 117 L359 114 L352 120 Z" fill="#d0d8d0" stroke="none" stroke-width="1" />
<rect x="348" y="115" width="9" height="3" fill="#2a70e0" />
<path d="M352 118 v3" fill="none" stroke="#e02020" stroke-width="2" />
<rect x="351" y="107" width="8" height="8" rx="0.8" fill="#f08a24"/>
<circle cx="355" cy="111" r="2.6" fill="#ffffff"/>
<circle cx="355" cy="111" r="1.1" fill="#f08a24"/>
<path d="M355 107.8 v6.4 M351.8 111 h6.4" stroke="#ffffff" stroke-width="1.2"/>
<path d="M372.5 115 L379 109 L385.5 115 M374.5 114 v8.5 h9 v-8.5" fill="#fff" stroke="#b86028" stroke-width="1.3" />
<rect x="379" y="116" width="3" height="3" fill="#6aa0e0" />
<rect x="376" y="118" width="2" height="4" fill="#e0a040" />
<rect x="380" y="107" width="8" height="8" rx="0.8" fill="#f08a24"/>
<circle cx="384" cy="111" r="2.6" fill="#ffffff"/>
<circle cx="384" cy="111" r="1.1" fill="#f08a24"/>
<path d="M384 107.8 v6.4 M380.8 111 h6.4" stroke="#ffffff" stroke-width="1.2"/>
<path d="M395.5 115 L402 109 L408.5 115 M397.5 114 v8.5 h9 v-8.5" fill="#fff" stroke="#b86028" stroke-width="1.3" />
<rect x="399" y="116" width="8" height="3" fill="#2a70e0" />
<path d="M403 119 v3" fill="none" stroke="#e02020" stroke-width="2" />
<rect x="403" y="107" width="8" height="8" rx="0.8" fill="#f08a24"/>
<circle cx="407" cy="111" r="2.6" fill="#ffffff"/>
<circle cx="407" cy="111" r="1.1" fill="#f08a24"/>
<path d="M407 107.8 v6.4 M403.8 111 h6.4" stroke="#ffffff" stroke-width="1.2"/>
<rect x="424" y="110" width="14" height="12" fill="#fafafa" />
<rect x="424" y="110" width="15" height="1" fill="#9a9a9a"/>
<rect x="424" y="122" width="15" height="1" fill="#9a9a9a"/>
<rect x="424" y="110" width="1" height="13" fill="#9a9a9a"/>
<rect x="438" y="110" width="1" height="13" fill="#9a9a9a"/>
<text x="427" y="121" font-size="10" fill="#303030" textLength="7.0" lengthAdjust="spacingAndGlyphs">P</text>
<rect x="423" y="107" width="8" height="8" rx="0.8" fill="#9a9a9a"/>
<circle cx="427" cy="111" r="2.6" fill="#ffffff"/>
<circle cx="427" cy="111" r="1.1" fill="#9a9a9a"/>
<path d="M427 107.8 v6.4 M423.8 111 h6.4" stroke="#ffffff" stroke-width="1.2"/>
<rect x="447" y="110" width="14" height="12" fill="#fafafa" />
<rect x="447" y="110" width="15" height="1" fill="#9a9a9a"/>
<rect x="447" y="122" width="15" height="1" fill="#9a9a9a"/>
<rect x="447" y="110" width="1" height="13" fill="#9a9a9a"/>
<rect x="461" y="110" width="1" height="13" fill="#9a9a9a"/>
<text x="448" y="121" font-size="10" fill="#303030" textLength="12.0" lengthAdjust="spacingAndGlyphs">ПР</text>
<rect x="446" y="107" width="8" height="8" rx="0.8" fill="#9a9a9a"/>
<circle cx="450" cy="111" r="2.6" fill="#ffffff"/>
<circle cx="450" cy="111" r="1.1" fill="#9a9a9a"/>
<path d="M450 107.8 v6.4 M446.8 111 h6.4" stroke="#ffffff" stroke-width="1.2"/>
<path d="M477 122 v-8" fill="none" stroke="#9a9a9a" stroke-width="3" />
<path d="M472 114 L477 108 L482 114 Z" fill="#9a9a9a" stroke="none" stroke-width="1" />
<path d="M500 108 v8" fill="none" stroke="#9a9a9a" stroke-width="3" />
<path d="M495 116 L500 122 L505 116 Z" fill="#9a9a9a" stroke="none" stroke-width="1" />
<path d="M524 114 L529 108 L534 114" fill="none" stroke="#b86028" stroke-width="1.3" />
<path d="M521.5 119 L525 115 L528.5 119 v3.5 h-7 z M529.5 119 L533 115 L536.5 119 v3.5 h-7 z" fill="#fff" stroke="#b86028" stroke-width="1.2" />
<rect x="528" y="112" width="3" height="3" fill="#6aa0e0" />
<rect x="546" y="111" width="12" height="11" fill="#3aa890" />
<rect x="544" y="113" width="12" height="10" fill="#58c0a8" />
<text x="545" y="121" font-size="10" fill="#fff" textLength="9.0" lengthAdjust="spacingAndGlyphs">%</text>
<rect x="552" y="107" width="8" height="8" rx="0.8" fill="#f08a24"/>
<circle cx="556" cy="111" r="2.6" fill="#ffffff"/>
<circle cx="556" cy="111" r="1.1" fill="#f08a24"/>
<path d="M556 107.8 v6.4 M552.8 111 h6.4" stroke="#ffffff" stroke-width="1.2"/>
<rect x="574" y="110" width="15" height="13" fill="#eef6ee" />
<rect x="574" y="110" width="15" height="1" fill="#8a8a8a"/>
<rect x="574" y="122" width="15" height="1" fill="#8a8a8a"/>
<rect x="574" y="110" width="1" height="13" fill="#8a8a8a"/>
<rect x="588" y="110" width="1" height="13" fill="#8a8a8a"/>
<text x="575" y="121" font-size="10" fill="#303030" textLength="13.0" lengthAdjust="spacingAndGlyphs">%</text>
<rect x="582" y="107" width="8" height="8" rx="0.8" fill="#f08a24"/>
<circle cx="586" cy="111" r="2.6" fill="#ffffff"/>
<circle cx="586" cy="111" r="1.1" fill="#f08a24"/>
<path d="M586 107.8 v6.4 M582.8 111 h6.4" stroke="#ffffff" stroke-width="1.2"/>
<rect x="597" y="110" width="15" height="13" fill="#e8f6e0" />
<rect x="597" y="110" width="15" height="1" fill="#8a8a8a"/>
<rect x="597" y="122" width="15" height="1" fill="#8a8a8a"/>
<rect x="597" y="110" width="1" height="13" fill="#8a8a8a"/>
<rect x="611" y="110" width="1" height="13" fill="#8a8a8a"/>
<text x="598" y="121" font-size="10" fill="#303030" textLength="13.0" lengthAdjust="spacingAndGlyphs">M29</text>
<rect x="605" y="107" width="8" height="8" rx="0.8" fill="#f08a24"/>
<circle cx="609" cy="111" r="2.6" fill="#ffffff"/>
<circle cx="609" cy="111" r="1.1" fill="#f08a24"/>
<path d="M609 107.8 v6.4 M605.8 111 h6.4" stroke="#ffffff" stroke-width="1.2"/>
<rect x="620" y="110" width="15" height="13" fill="#e8f0fa" />
<rect x="620" y="110" width="15" height="1" fill="#8a8a8a"/>
<rect x="620" y="122" width="15" height="1" fill="#8a8a8a"/>
<rect x="620" y="110" width="1" height="13" fill="#8a8a8a"/>
<rect x="634" y="110" width="1" height="13" fill="#8a8a8a"/>
<text x="621" y="121" font-size="10" fill="#303030" textLength="13.0" lengthAdjust="spacingAndGlyphs">PI</text>
<rect x="628" y="107" width="8" height="8" rx="0.8" fill="#f08a24"/>
<circle cx="632" cy="111" r="2.6" fill="#ffffff"/>
<circle cx="632" cy="111" r="1.1" fill="#f08a24"/>
<path d="M632 107.8 v6.4 M628.8 111 h6.4" stroke="#ffffff" stroke-width="1.2"/>
<rect x="643" y="110" width="15" height="13" fill="#e8f6e8" />
<rect x="643" y="110" width="15" height="1" fill="#8a8a8a"/>
<rect x="643" y="122" width="15" height="1" fill="#8a8a8a"/>
<rect x="643" y="110" width="1" height="13" fill="#8a8a8a"/>
<rect x="657" y="110" width="1" height="13" fill="#8a8a8a"/>
<text x="644" y="121" font-size="10" fill="#303030" textLength="13.0" lengthAdjust="spacingAndGlyphs">Ф3</text>
<rect x="651" y="107" width="8" height="8" rx="0.8" fill="#f08a24"/>
<circle cx="655" cy="111" r="2.6" fill="#ffffff"/>
<circle cx="655" cy="111" r="1.1" fill="#f08a24"/>
<path d="M655 107.8 v6.4 M651.8 111 h6.4" stroke="#ffffff" stroke-width="1.2"/>
<path d="M671.5 111.5 h6 l1 2 h8 v9 h-15 z" fill="#a8a8a8" stroke="#909090" stroke-width="1" />
<rect x="679" y="107" width="8" height="8" rx="0.8" fill="#9a9a9a"/>
<circle cx="683" cy="111" r="2.6" fill="#ffffff"/>
<circle cx="683" cy="111" r="1.1" fill="#9a9a9a"/>
<path d="M683 107.8 v6.4 M679.8 111 h6.4" stroke="#ffffff" stroke-width="1.2"/>
<path d="M703 110 L712 119 M712 110 L703 119" fill="none" stroke="#8a8a8a" stroke-width="1.4" />
<rect x="2" y="130" width="64" height="20" fill="#f0f0f0" />
<rect x="3" y="130" width="63" height="1" fill="#ffffff"/>
<rect x="2" y="131" width="1" height="19" fill="#ffffff"/>
<rect x="66" y="131" width="1" height="19" fill="#a0a0a0"/>
<rect x="67" y="131" width="1" height="19" fill="#696969"/>
<text x="9.7" y="143" font-size="12" fill="#000" textLength="50.5" lengthAdjust="spacingAndGlyphs">Структура</text>
<rect x="68" y="149" width="453" height="1" fill="#ffffff"/>
<rect x="520" y="149" width="1" height="937" fill="#696969"/>
<rect x="521" y="149" width="1" height="937" fill="#a0a0a0"/>
<rect x="2" y="1085" width="520" height="1" fill="#696969"/>
<rect x="2" y="1084" width="520" height="1" fill="#a0a0a0"/>
<rect x="5" y="153" width="513" height="929" fill="#ffffff" />
<rect x="5" y="153" width="513" height="1" fill="#a0a0a0"/>
<rect x="6" y="154" width="511" height="1" fill="#696969"/>
<rect x="5" y="153" width="1" height="929" fill="#a0a0a0"/>
<rect x="6" y="154" width="1" height="927" fill="#696969"/>
<rect x="5" y="1081" width="514" height="1" fill="#ffffff"/>
<rect x="518" y="153" width="1" height="929" fill="#ffffff"/>
<rect x="6" y="1080" width="512" height="1" fill="#e3e3e3"/>
<rect x="517" y="154" width="1" height="927" fill="#e3e3e3"/>
<line x1="34.5" y1="171" x2="34.5" y2="420" stroke="#808080" stroke-width="1" stroke-dasharray="1 1"/>
<line x1="53.5" y1="187" x2="53.5" y2="372" stroke="#808080" stroke-width="1" stroke-dasharray="1 1"/>
<line x1="72.5" y1="203" x2="72.5" y2="356" stroke="#808080" stroke-width="1" stroke-dasharray="1 1"/>
<line x1="91.5" y1="235" x2="91.5" y2="340" stroke="#808080" stroke-width="1" stroke-dasharray="1 1"/>
<line x1="110.5" y1="283" x2="110.5" y2="292" stroke="#808080" stroke-width="1" stroke-dasharray="1 1"/>
<line x1="20" y1="163.5" x2="26" y2="163.5" stroke="#808080" stroke-width="1" stroke-dasharray="1 1"/>
<rect x="11" y="159" width="9" height="9" fill="#ffffff" />
<rect x="11" y="159" width="9" height="1" fill="#808080"/>
<rect x="11" y="167" width="9" height="1" fill="#808080"/>
<rect x="11" y="159" width="1" height="9" fill="#808080"/>
<rect x="19" y="159" width="1" height="9" fill="#808080"/>
<rect x="13" y="163" width="5" height="1" fill="#000"/>
<path d="M31.5 156 L37 168 L26.5 168 Z" fill="#3a6ac8"/>
<rect x="34" y="160" width="8" height="8" fill="#6ab838" />
<circle cx="33" cy="165" r="4" fill="url(#gred)"/>
<text x="47.5" y="167" font-size="12" fill="#000" textLength="44.1" lengthAdjust="spacingAndGlyphs">Проекты</text>
<line x1="39" y1="179.5" x2="45" y2="179.5" stroke="#808080" stroke-width="1" stroke-dasharray="1 1"/>
<rect x="30" y="175" width="9" height="9" fill="#ffffff" />
<rect x="30" y="175" width="9" height="1" fill="#808080"/>
<rect x="30" y="183" width="9" height="1" fill="#808080"/>
<rect x="30" y="175" width="1" height="9" fill="#808080"/>
<rect x="38" y="175" width="1" height="9" fill="#808080"/>
<rect x="32" y="179" width="5" height="1" fill="#000"/>
<rect x="45" y="177" width="5" height="10" fill="#3a78d8" />
<rect x="50" y="174" width="5" height="13" fill="#4a88e0" />
<rect x="55" y="179" width="5" height="8" fill="#3a78d8" />
<rect x="51" y="176" width="3" height="1" fill="#c8dcff"/>
<rect x="51" y="178" width="3" height="1" fill="#c8dcff"/>
<rect x="51" y="180" width="3" height="1" fill="#c8dcff"/>
<rect x="51" y="182" width="3" height="1" fill="#c8dcff"/>
<rect x="51" y="184" width="3" height="1" fill="#c8dcff"/>
<rect x="51" y="186" width="3" height="1" fill="#c8dcff"/>
<rect x="46" y="179" width="3" height="1" fill="#c8dcff"/>
<rect x="46" y="181" width="3" height="1" fill="#c8dcff"/>
<rect x="46" y="183" width="3" height="1" fill="#c8dcff"/>
<rect x="46" y="185" width="3" height="1" fill="#c8dcff"/>
<rect x="56" y="181" width="3" height="1" fill="#c8dcff"/>
<rect x="56" y="183" width="3" height="1" fill="#c8dcff"/>
<rect x="56" y="185" width="3" height="1" fill="#c8dcff"/>
<rect x="51" y="171" width="1" height="4" fill="#404040"/>
<path d="M52 171 L55 172 L52 173 Z" fill="#f02020"/>
<text x="66.5" y="183" font-size="12" fill="#000" textLength="231.4" lengthAdjust="spacingAndGlyphs">256-02-2025 [Здание спортивного комплекса]</text>
<text x="305.2" y="183" font-size="12" fill="#0000ff" textLength="12.2" lengthAdjust="spacingAndGlyphs">[4]</text>
<line x1="58" y1="195.5" x2="64" y2="195.5" stroke="#808080" stroke-width="1" stroke-dasharray="1 1"/>
<rect x="49" y="191" width="9" height="9" fill="#ffffff" />
<rect x="49" y="191" width="9" height="1" fill="#808080"/>
<rect x="49" y="199" width="9" height="1" fill="#808080"/>
<rect x="49" y="191" width="1" height="9" fill="#808080"/>
<rect x="57" y="191" width="1" height="9" fill="#808080"/>
<rect x="51" y="195" width="5" height="1" fill="#000"/>
<rect x="53" y="193" width="1" height="5" fill="#000"/>
<rect x="65" y="188" width="1" height="15" fill="#8a8a8a"/>
<rect x="68" y="188" width="1" height="15" fill="#8a8a8a"/>
<rect x="65" y="190" width="4" height="1" fill="#b0b0b0"/>
<rect x="65" y="193" width="4" height="1" fill="#b0b0b0"/>
<rect x="65" y="196" width="4" height="1" fill="#b0b0b0"/>
<rect x="65" y="199" width="4" height="1" fill="#b0b0b0"/>
<rect x="65" y="202" width="4" height="1" fill="#b0b0b0"/>
<path d="M75 188 l2 2 v2 l2 2 v6 h-4 z" fill="#9a6ae8"/>
<path d="M69 195 L74 188 L78 195 Z" fill="#b08af0"/>
<path d="M68.5 196 L73.5 188.5 L78.5 196" fill="none" stroke="#7a2040" stroke-width="0.9"/>
<rect x="68" y="195" width="12" height="2" fill="#f08a30" />
<rect x="68" y="197" width="12" height="1" fill="#b05010" />
<rect x="71" y="198" width="1.6" height="1.4" fill="#2a8af0" />
<rect x="73" y="198" width="1.6" height="1.4" fill="#2a8af0" />
<rect x="76" y="198" width="1.6" height="1.4" fill="#2a8af0" />
<rect x="78" y="198" width="1.6" height="1.4" fill="#2a8af0" />
<rect x="71" y="200" width="1.6" height="1.4" fill="#2a8af0" />
<rect x="73" y="200" width="1.6" height="1.4" fill="#2a8af0" />
<rect x="76" y="200" width="1.6" height="1.4" fill="#2a8af0" />
<rect x="78" y="200" width="1.6" height="1.4" fill="#2a8af0" />
<rect x="71" y="202" width="1.6" height="1.4" fill="#2a8af0" />
<rect x="73" y="202" width="1.6" height="1.4" fill="#2a8af0" />
<rect x="76" y="202" width="1.6" height="1.4" fill="#2a8af0" />
<rect x="78" y="202" width="1.6" height="1.4" fill="#2a8af0" />
<text x="85.5" y="199" font-size="12" fill="#000" textLength="264.8" lengthAdjust="spacingAndGlyphs">ОСР-01-01  [Подготовка территории строительства]</text>
<text x="355.5" y="199" font-size="12" fill="#0000ff" textLength="12.2" lengthAdjust="spacingAndGlyphs">[1]</text>
<line x1="58" y1="211.5" x2="64" y2="211.5" stroke="#808080" stroke-width="1" stroke-dasharray="1 1"/>
<rect x="49" y="207" width="9" height="9" fill="#ffffff" />
<rect x="49" y="207" width="9" height="1" fill="#808080"/>
<rect x="49" y="215" width="9" height="1" fill="#808080"/>
<rect x="49" y="207" width="1" height="9" fill="#808080"/>
<rect x="57" y="207" width="1" height="9" fill="#808080"/>
<rect x="51" y="211" width="5" height="1" fill="#000"/>
<rect x="65" y="204" width="1" height="15" fill="#8a8a8a"/>
<rect x="68" y="204" width="1" height="15" fill="#8a8a8a"/>
<rect x="65" y="206" width="4" height="1" fill="#b0b0b0"/>
<rect x="65" y="209" width="4" height="1" fill="#b0b0b0"/>
<rect x="65" y="212" width="4" height="1" fill="#b0b0b0"/>
<rect x="65" y="215" width="4" height="1" fill="#b0b0b0"/>
<rect x="65" y="218" width="4" height="1" fill="#b0b0b0"/>
<path d="M75 204 l2 2 v2 l2 2 v6 h-4 z" fill="#9a6ae8"/>
<path d="M69 211 L74 204 L78 211 Z" fill="#b08af0"/>
<path d="M68.5 212 L73.5 204.5 L78.5 212" fill="none" stroke="#7a2040" stroke-width="0.9"/>
<rect x="68" y="211" width="12" height="2" fill="#f08a30" />
<rect x="68" y="213" width="12" height="1" fill="#b05010" />
<rect x="71" y="214" width="1.6" height="1.4" fill="#2a8af0" />
<rect x="73" y="214" width="1.6" height="1.4" fill="#2a8af0" />
<rect x="76" y="214" width="1.6" height="1.4" fill="#2a8af0" />
<rect x="78" y="214" width="1.6" height="1.4" fill="#2a8af0" />
<rect x="71" y="216" width="1.6" height="1.4" fill="#2a8af0" />
<rect x="73" y="216" width="1.6" height="1.4" fill="#2a8af0" />
<rect x="76" y="216" width="1.6" height="1.4" fill="#2a8af0" />
<rect x="78" y="216" width="1.6" height="1.4" fill="#2a8af0" />
<rect x="71" y="218" width="1.6" height="1.4" fill="#2a8af0" />
<rect x="73" y="218" width="1.6" height="1.4" fill="#2a8af0" />
<rect x="76" y="218" width="1.6" height="1.4" fill="#2a8af0" />
<rect x="78" y="218" width="1.6" height="1.4" fill="#2a8af0" />
<text x="85.5" y="215" font-size="12" fill="#000" textLength="240.1" lengthAdjust="spacingAndGlyphs">ОСР-02-01 [Основные объекты строительства]</text>
<text x="330.5" y="215" font-size="12" fill="#0000ff" textLength="12.2" lengthAdjust="spacingAndGlyphs">[2]</text>
<line x1="77" y1="227.5" x2="83" y2="227.5" stroke="#808080" stroke-width="1" stroke-dasharray="1 1"/>
<rect x="68" y="223" width="9" height="9" fill="#ffffff" />
<rect x="68" y="223" width="9" height="1" fill="#808080"/>
<rect x="68" y="231" width="9" height="1" fill="#808080"/>
<rect x="68" y="223" width="1" height="9" fill="#808080"/>
<rect x="76" y="223" width="1" height="9" fill="#808080"/>
<rect x="70" y="227" width="5" height="1" fill="#000"/>
<path d="M83.5 226 L91 220 L99 224 L91.5 231 Z" fill="#3e9a58" stroke="#2a7a40" stroke-width="0.8"/>
<path d="M83.5 226 L84 229 L91.5 234.5 L99 227.5 L99 224 L91.5 231 Z" fill="#d8dcd8" stroke="#a8b0a8" stroke-width="0.7"/>
<path d="M89 224 L94 226.5" stroke="#e8f8e8" stroke-width="1.6"/>
<rect x="102" y="219" width="174" height="16" fill="#0078d7" />
<rect x="102.5" y="219.5" width="173" height="15" fill="none" stroke="#d07010" stroke-width="1" stroke-dasharray="1 1"/>
<text x="104" y="231" font-size="12" fill="#ffffff" textLength="169.0" lengthAdjust="spacingAndGlyphs">ЛС-02-01 [Устройство котлована]</text>
<line x1="96" y1="243.5" x2="101" y2="243.5" stroke="#808080" stroke-width="1" stroke-dasharray="1 1"/>
<rect x="87" y="239" width="9" height="9" fill="#ffffff" />
<rect x="87" y="239" width="9" height="1" fill="#808080"/>
<rect x="87" y="247" width="9" height="1" fill="#808080"/>
<rect x="87" y="239" width="1" height="9" fill="#808080"/>
<rect x="95" y="239" width="1" height="9" fill="#808080"/>
<rect x="89" y="243" width="5" height="1" fill="#000"/>
<rect x="91" y="241" width="1" height="5" fill="#000"/>
<path d="M102 237 h6 l1 2 h8 v10 h-15 z" fill="#3aa8e8" stroke="#4a88b8" stroke-width="1"/>
<rect x="102.5" y="240" width="14" height="8.5" fill="url(#gblue)"/>
<text x="123.5" y="247" font-size="12" fill="#000" textLength="62.4" lengthAdjust="spacingAndGlyphs">СТРУКТУРА</text>
<line x1="96" y1="259.5" x2="101" y2="259.5" stroke="#808080" stroke-width="1" stroke-dasharray="1 1"/>
<rect x="87" y="255" width="9" height="9" fill="#ffffff" />
<rect x="87" y="255" width="9" height="1" fill="#808080"/>
<rect x="87" y="263" width="9" height="1" fill="#808080"/>
<rect x="87" y="255" width="1" height="9" fill="#808080"/>
<rect x="95" y="255" width="1" height="9" fill="#808080"/>
<rect x="89" y="259" width="5" height="1" fill="#000"/>
<rect x="91" y="257" width="1" height="5" fill="#000"/>
<path d="M102 253 h6 l1 2 h8 v10 h-15 z" fill="#3aa8e8" stroke="#4a88b8" stroke-width="1"/>
<rect x="102.5" y="256" width="14" height="8.5" fill="url(#gblue)"/>
<text x="123.5" y="263" font-size="12" fill="#000" textLength="40.8" lengthAdjust="spacingAndGlyphs">СМЕТЫ</text>
<line x1="96" y1="275.5" x2="101" y2="275.5" stroke="#808080" stroke-width="1" stroke-dasharray="1 1"/>
<rect x="87" y="271" width="9" height="9" fill="#ffffff" />
<rect x="87" y="271" width="9" height="1" fill="#808080"/>
<rect x="87" y="279" width="9" height="1" fill="#808080"/>
<rect x="87" y="271" width="1" height="9" fill="#808080"/>
<rect x="95" y="271" width="1" height="9" fill="#808080"/>
<rect x="89" y="275" width="5" height="1" fill="#000"/>
<path d="M102 269 h6 l1 2 h8 v10 h-15 z" fill="#3aa8e8" stroke="#4a88b8" stroke-width="1"/>
<rect x="102.5" y="272" width="14" height="8.5" fill="url(#gblue)"/>
<text x="123.5" y="279" font-size="12" fill="#000" textLength="79.1" lengthAdjust="spacingAndGlyphs">ВЫПОЛНЕНИЕ</text>
<line x1="110" y1="291.5" x2="120" y2="291.5" stroke="#808080" stroke-width="1" stroke-dasharray="1 1"/>
<rect x="120" y="286" width="17" height="12" fill="#e8f0f0" />
<rect x="120" y="286" width="17" height="1" fill="#909090"/>
<rect x="120" y="297" width="17" height="1" fill="#909090"/>
<rect x="120" y="286" width="1" height="12" fill="#909090"/>
<rect x="136" y="286" width="1" height="12" fill="#909090"/>
<text x="121" y="296" font-size="9" fill="#404040" textLength="15" lengthAdjust="spacingAndGlyphs">КС6</text>
<text x="141.6" y="295" font-size="12" fill="#000" textLength="30.1" lengthAdjust="spacingAndGlyphs">КС-6а</text>
<line x1="91" y1="307.5" x2="101" y2="307.5" stroke="#808080" stroke-width="1" stroke-dasharray="1 1"/>
<path d="M102 301 h6 l1 2 h8 v10 h-15 z" fill="#3aa8e8" stroke="#4a88b8" stroke-width="1"/>
<rect x="102.5" y="304" width="14" height="8.5" fill="url(#gblue)"/>
<text x="123.5" y="311" font-size="12" fill="#000" textLength="25.1" lengthAdjust="spacingAndGlyphs">М-29</text>
<line x1="96" y1="323.5" x2="101" y2="323.5" stroke="#808080" stroke-width="1" stroke-dasharray="1 1"/>
<rect x="87" y="319" width="9" height="9" fill="#ffffff" />
<rect x="87" y="319" width="9" height="1" fill="#808080"/>
<rect x="87" y="327" width="9" height="1" fill="#808080"/>
<rect x="87" y="319" width="1" height="9" fill="#808080"/>
<rect x="95" y="319" width="1" height="9" fill="#808080"/>
<rect x="89" y="323" width="5" height="1" fill="#000"/>
<rect x="91" y="321" width="1" height="5" fill="#000"/>
<path d="M102 317 h6 l1 2 h8 v10 h-15 z" fill="#3aa8e8" stroke="#4a88b8" stroke-width="1"/>
<rect x="102.5" y="320" width="14" height="8.5" fill="url(#gblue)"/>
<text x="123.5" y="327" font-size="12" fill="#000" textLength="69.4" lengthAdjust="spacingAndGlyphs">РЕСУРСНЫЕ</text>
<line x1="96" y1="339.5" x2="101" y2="339.5" stroke="#808080" stroke-width="1" stroke-dasharray="1 1"/>
<rect x="87" y="335" width="9" height="9" fill="#ffffff" />
<rect x="87" y="335" width="9" height="1" fill="#808080"/>
<rect x="87" y="343" width="9" height="1" fill="#808080"/>
<rect x="87" y="335" width="1" height="9" fill="#808080"/>
<rect x="95" y="335" width="1" height="9" fill="#808080"/>
<rect x="89" y="339" width="5" height="1" fill="#000"/>
<rect x="91" y="337" width="1" height="5" fill="#000"/>
<path d="M102 333 h6 l1 2 h8 v10 h-15 z" fill="#3aa8e8" stroke="#4a88b8" stroke-width="1"/>
<rect x="102.5" y="336" width="14" height="8.5" fill="url(#gblue)"/>
<text x="123.5" y="343" font-size="12" fill="#000" textLength="24.0" lengthAdjust="spacingAndGlyphs">КС-3</text>
<line x1="77" y1="355.5" x2="83" y2="355.5" stroke="#808080" stroke-width="1" stroke-dasharray="1 1"/>
<rect x="68" y="351" width="9" height="9" fill="#ffffff" />
<rect x="68" y="351" width="9" height="1" fill="#808080"/>
<rect x="68" y="359" width="9" height="1" fill="#808080"/>
<rect x="68" y="351" width="1" height="9" fill="#808080"/>
<rect x="76" y="351" width="1" height="9" fill="#808080"/>
<rect x="70" y="355" width="5" height="1" fill="#000"/>
<rect x="72" y="353" width="1" height="5" fill="#000"/>
<path d="M83.5 354 L91 348 L99 352 L91.5 359 Z" fill="#3e9a58" stroke="#2a7a40" stroke-width="0.8"/>
<path d="M83.5 354 L84 357 L91.5 362.5 L99 355.5 L99 352 L91.5 359 Z" fill="#d8dcd8" stroke="#a8b0a8" stroke-width="0.7"/>
<path d="M89 352 L94 354.5" stroke="#e8f8e8" stroke-width="1.6"/>
<text x="104" y="359" font-size="12" fill="#000" textLength="121.3" lengthAdjust="spacingAndGlyphs">ЛС-02-02 [Фундаменты]</text>
<line x1="58" y1="371.5" x2="64" y2="371.5" stroke="#808080" stroke-width="1" stroke-dasharray="1 1"/>
<rect x="49" y="367" width="9" height="9" fill="#ffffff" />
<rect x="49" y="367" width="9" height="1" fill="#808080"/>
<rect x="49" y="375" width="9" height="1" fill="#808080"/>
<rect x="49" y="367" width="1" height="9" fill="#808080"/>
<rect x="57" y="367" width="1" height="9" fill="#808080"/>
<rect x="51" y="371" width="5" height="1" fill="#000"/>
<rect x="53" y="369" width="1" height="5" fill="#000"/>
<rect x="65" y="364" width="1" height="15" fill="#8a8a8a"/>
<rect x="68" y="364" width="1" height="15" fill="#8a8a8a"/>
<rect x="65" y="366" width="4" height="1" fill="#b0b0b0"/>
<rect x="65" y="369" width="4" height="1" fill="#b0b0b0"/>
<rect x="65" y="372" width="4" height="1" fill="#b0b0b0"/>
<rect x="65" y="375" width="4" height="1" fill="#b0b0b0"/>
<rect x="65" y="378" width="4" height="1" fill="#b0b0b0"/>
<path d="M75 364 l2 2 v2 l2 2 v6 h-4 z" fill="#9a6ae8"/>
<path d="M69 371 L74 364 L78 371 Z" fill="#b08af0"/>
<path d="M68.5 372 L73.5 364.5 L78.5 372" fill="none" stroke="#7a2040" stroke-width="0.9"/>
<rect x="68" y="371" width="12" height="2" fill="#f08a30" />
<rect x="68" y="373" width="12" height="1" fill="#b05010" />
<rect x="71" y="374" width="1.6" height="1.4" fill="#2a8af0" />
<rect x="73" y="374" width="1.6" height="1.4" fill="#2a8af0" />
<rect x="76" y="374" width="1.6" height="1.4" fill="#2a8af0" />
<rect x="78" y="374" width="1.6" height="1.4" fill="#2a8af0" />
<rect x="71" y="376" width="1.6" height="1.4" fill="#2a8af0" />
<rect x="73" y="376" width="1.6" height="1.4" fill="#2a8af0" />
<rect x="76" y="376" width="1.6" height="1.4" fill="#2a8af0" />
<rect x="78" y="376" width="1.6" height="1.4" fill="#2a8af0" />
<rect x="71" y="378" width="1.6" height="1.4" fill="#2a8af0" />
<rect x="73" y="378" width="1.6" height="1.4" fill="#2a8af0" />
<rect x="76" y="378" width="1.6" height="1.4" fill="#2a8af0" />
<rect x="78" y="378" width="1.6" height="1.4" fill="#2a8af0" />
<text x="85.5" y="375" font-size="12" fill="#000" textLength="202.8" lengthAdjust="spacingAndGlyphs">ОСР-03-01 [Объекты вспомогательные]</text>
<line x1="39" y1="387.5" x2="45" y2="387.5" stroke="#808080" stroke-width="1" stroke-dasharray="1 1"/>
<rect x="30" y="383" width="9" height="9" fill="#ffffff" />
<rect x="30" y="383" width="9" height="1" fill="#808080"/>
<rect x="30" y="391" width="9" height="1" fill="#808080"/>
<rect x="30" y="383" width="1" height="9" fill="#808080"/>
<rect x="38" y="383" width="1" height="9" fill="#808080"/>
<rect x="32" y="387" width="5" height="1" fill="#000"/>
<rect x="34" y="385" width="1" height="5" fill="#000"/>
<path d="M46 381 h6 l1 2 h8 v11 h-15 z" fill="url(#gyel)" stroke="#c8a040" stroke-width="1"/>
<text x="66.5" y="391" font-size="12" fill="#000" textLength="137.4" lengthAdjust="spacingAndGlyphs">Новая папка [Новая папка]</text>
<line x1="39" y1="403.5" x2="45" y2="403.5" stroke="#808080" stroke-width="1" stroke-dasharray="1 1"/>
<rect x="30" y="399" width="9" height="9" fill="#ffffff" />
<rect x="30" y="399" width="9" height="1" fill="#808080"/>
<rect x="30" y="407" width="9" height="1" fill="#808080"/>
<rect x="30" y="399" width="1" height="9" fill="#808080"/>
<rect x="38" y="399" width="1" height="9" fill="#808080"/>
<rect x="32" y="403" width="5" height="1" fill="#000"/>
<rect x="34" y="401" width="1" height="5" fill="#000"/>
<path d="M47 397 h5 l1 2 h7 v7 h-13 z" fill="#ffe080" stroke="#d0a030" stroke-width="0.8"/>
<path d="M45 405 q4 6 10 4 l5 -3" stroke="#e08030" stroke-width="2.5" fill="none"/>
<text x="66.5" y="407" font-size="12" fill="#000" textLength="40.2" lengthAdjust="spacingAndGlyphs">ОБМЕН</text>
<text x="112.7" y="407" font-size="12" fill="#0000ff" textLength="12.2" lengthAdjust="spacingAndGlyphs">[1]</text>
<line x1="39" y1="419.5" x2="45" y2="419.5" stroke="#808080" stroke-width="1" stroke-dasharray="1 1"/>
<rect x="30" y="415" width="9" height="9" fill="#ffffff" />
<rect x="30" y="415" width="9" height="1" fill="#808080"/>
<rect x="30" y="423" width="9" height="1" fill="#808080"/>
<rect x="30" y="415" width="1" height="9" fill="#808080"/>
<rect x="38" y="415" width="1" height="9" fill="#808080"/>
<rect x="32" y="419" width="5" height="1" fill="#000"/>
<rect x="34" y="417" width="1" height="5" fill="#000"/>
<path d="M49 416 h8 l-1 11 h-6 z" fill="#9098a0" stroke="#606870" stroke-width="0.8"/>
<rect x="48" y="414" width="10" height="2" fill="#707880" />
<path d="M50 414 q3 -4 6 0" stroke="#707880" fill="none"/>
<rect x="50" y="419" width="7" height="1" fill="#d0d8e0"/>
<rect x="50" y="422" width="7" height="1" fill="#d0d8e0"/>
<rect x="50" y="425" width="7" height="1" fill="#d0d8e0"/>
<text x="66.5" y="423" font-size="12" fill="#000" textLength="51.8" lengthAdjust="spacingAndGlyphs">КОРЗИНА</text>
<rect x="525" y="129" width="1" height="956" fill="#ffffff"/>
<rect x="1755" y="129" width="1" height="957" fill="#8a8a8a"/>
<rect x="526" y="1084" width="1229" height="1" fill="#696969"/>
<rect x="527" y="1083" width="1227" height="1" fill="#a0a0a0"/>
<rect x="1754" y="150" width="1" height="935" fill="#696969"/>
<rect x="1753" y="151" width="1" height="933" fill="#a0a0a0"/>
<rect x="526" y="150" width="1227" height="1" fill="#ffffff"/>
<rect x="528" y="132" width="74" height="19" fill="#f0f0f0" />
<rect x="529" y="132" width="72" height="1" fill="#ffffff"/>
<rect x="528" y="133" width="1" height="18" fill="#ffffff"/>
<text x="534.5" y="146" font-size="12" fill="#000" textLength="62.5" lengthAdjust="spacingAndGlyphs">Содержание</text>
<rect x="676" y="132" width="100" height="19" fill="#f0f0f0" />
<rect x="677" y="132" width="98" height="1" fill="#ffffff"/>
<rect x="676" y="133" width="1" height="18" fill="#ffffff"/>
<rect x="774" y="133" width="1" height="18" fill="#a0a0a0"/>
<rect x="775" y="133" width="1" height="18" fill="#696969"/>
<text x="680.3" y="146" font-size="12" fill="#000" textLength="89.6" lengthAdjust="spacingAndGlyphs">Объектная смета</text>
<rect x="776" y="132" width="58" height="19" fill="#f0f0f0" />
<rect x="777" y="132" width="56" height="1" fill="#ffffff"/>
<rect x="776" y="133" width="1" height="18" fill="#ffffff"/>
<rect x="832" y="133" width="1" height="18" fill="#a0a0a0"/>
<rect x="833" y="133" width="1" height="18" fill="#696969"/>
<text x="782" y="146" font-size="12" fill="#000" textLength="47.4" lengthAdjust="spacingAndGlyphs">ССР и С3</text>
<rect x="834" y="132" width="43" height="19" fill="#f0f0f0" />
<rect x="835" y="132" width="41" height="1" fill="#ffffff"/>
<rect x="834" y="133" width="1" height="18" fill="#ffffff"/>
<rect x="875" y="133" width="1" height="18" fill="#a0a0a0"/>
<rect x="876" y="133" width="1" height="18" fill="#696969"/>
<text x="841" y="146" font-size="12" fill="#000" textLength="31.7" lengthAdjust="spacingAndGlyphs">НМЦК</text>
<rect x="877" y="132" width="44" height="19" fill="#f0f0f0" />
<rect x="878" y="132" width="42" height="1" fill="#ffffff"/>
<rect x="877" y="133" width="1" height="18" fill="#ffffff"/>
<rect x="919" y="133" width="1" height="18" fill="#a0a0a0"/>
<rect x="920" y="133" width="1" height="18" fill="#696969"/>
<text x="884.5" y="146" font-size="12" fill="#000" textLength="23.0" lengthAdjust="spacingAndGlyphs">ВОР</text>
<rect x="921" y="132" width="197" height="19" fill="#f0f0f0" />
<rect x="922" y="132" width="195" height="1" fill="#ffffff"/>
<rect x="921" y="133" width="1" height="18" fill="#ffffff"/>
<rect x="1116" y="133" width="1" height="18" fill="#a0a0a0"/>
<rect x="1117" y="133" width="1" height="18" fill="#696969"/>
<text x="927.5" y="146" font-size="12" fill="#000" textLength="185.0" lengthAdjust="spacingAndGlyphs">Исполнение Сметы контракта (ЕИС)</text>
<rect x="602" y="130" width="74" height="21" fill="#f0f0f0" />
<rect x="603" y="130" width="72" height="1" fill="#ffffff"/>
<rect x="602" y="131" width="1" height="20" fill="#ffffff"/>
<rect x="674" y="131" width="1" height="20" fill="#a0a0a0"/>
<rect x="675" y="131" width="1" height="20" fill="#696969"/>
<text x="609.5" y="144" font-size="12" fill="#000" textLength="59.0" lengthAdjust="spacingAndGlyphs">Параметры</text>
<rect x="603" y="150" width="71" height="2" fill="#f0f0f0" />
<rect x="526" y="151" width="1" height="932" fill="#ffffff"/>
<rect x="536" y="161" width="13" height="13" fill="#ffffff" />
<rect x="536" y="161" width="13" height="1" fill="#a0a0a0"/>
<rect x="536" y="161" width="1" height="13" fill="#a0a0a0"/>
<rect x="537" y="173" width="12" height="1" fill="#e3e3e3"/>
<rect x="548" y="162" width="1" height="12" fill="#e3e3e3"/>
<text x="552.4" y="172" font-size="12" fill="#000" textLength="152.0" lengthAdjust="spacingAndGlyphs">Проектная смета утверждена</text>
<rect x="530" y="184" width="1221" height="1" fill="#a0a0a0"/>
<rect x="530" y="185" width="1221" height="1" fill="#ffffff"/>
<text x="538" y="204" font-size="12" fill="#000" textLength="102.3" lengthAdjust="spacingAndGlyphs">Типовые настройки:</text>
<rect x="646" y="193" width="1098" height="15" fill="#ffffff" />
<rect x="1730" y="194" width="13" height="13" fill="#f7f7f7" />
<path d="M1732 198.5 L1740 198.5 L1736 202.5 Z" fill="#000"/>
<text x="647.3" y="204" font-size="12" fill="#000" textLength="85.9" lengthAdjust="spacingAndGlyphs">ФСНБ-2022_И15</text>
<rect x="530" y="216" width="1221" height="1" fill="#a0a0a0"/>
<rect x="530" y="217" width="1221" height="1" fill="#ffffff"/>
<rect x="536" y="225" width="13" height="13" fill="#ffffff" />
<rect x="536" y="225" width="13" height="1" fill="#a0a0a0"/>
<rect x="536" y="225" width="1" height="13" fill="#a0a0a0"/>
<rect x="537" y="237" width="12" height="1" fill="#e3e3e3"/>
<rect x="548" y="226" width="1" height="12" fill="#e3e3e3"/>
<path d="M538.5 231 L541 234 L546 228" stroke="#000" stroke-width="2" fill="none"/>
<text x="552.4" y="236" font-size="12" fill="#000" textLength="227.0" lengthAdjust="spacingAndGlyphs">Применять индексы в соответствии с 421пр</text>
<rect x="794" y="225" width="213" height="15" fill="#ffffff" />
<rect x="993" y="226" width="13" height="13" fill="#f7f7f7" />
<path d="M995 230.5 L1003 230.5 L999 234.5 Z" fill="#000"/>
<text x="795.2" y="236.5" font-size="12" fill="#000" textLength="52.5" lengthAdjust="spacingAndGlyphs">построчно</text>
<rect x="530" y="246" width="145" height="804" fill="#ffffff" />
<rect x="530" y="246" width="145" height="1" fill="#a0a0a0"/>
<rect x="530" y="246" width="1" height="804" fill="#a0a0a0"/>
<rect x="530" y="1049" width="145" height="1" fill="#a0a0a0"/>
<rect x="674" y="246" width="1" height="804" fill="#a0a0a0"/>
<rect x="532" y="328" width="143" height="16" fill="#0078d7" />
<text x="537.6" y="260" font-size="12" fill="#000" textLength="74.0" lengthAdjust="spacingAndGlyphs">Уровни цен (2)</text>
<text x="537.6" y="276" font-size="12" fill="#000" textLength="79.0" lengthAdjust="spacingAndGlyphs">Типовой расчет</text>
<text x="537.6" y="292" font-size="12" fill="#000" textLength="79.6" lengthAdjust="spacingAndGlyphs">Способ расчета</text>
<text x="537.6" y="308" font-size="12" fill="#000" textLength="49.5" lengthAdjust="spacingAndGlyphs">Поправки</text>
<text x="537.6" y="324" font-size="12" fill="#000" textLength="102.7" lengthAdjust="spacingAndGlyphs">Работа со строками</text>
<text x="537.6" y="340" font-size="12" fill="#ffffff" textLength="112.5" lengthAdjust="spacingAndGlyphs">Поисковые маршруты</text>
<text x="537.6" y="356" font-size="12" fill="#000" textLength="75.5" lengthAdjust="spacingAndGlyphs">Наименования</text>
<text x="537.6" y="372" font-size="12" fill="#000" textLength="49.5" lengthAdjust="spacingAndGlyphs">Описание</text>
<text x="537.6" y="388" font-size="12" fill="#000" textLength="98.5" lengthAdjust="spacingAndGlyphs">Должностные лица</text>
<text x="537.6" y="404" font-size="12" fill="#000" textLength="57.7" lengthAdjust="spacingAndGlyphs">Статистика</text>
<text x="537.6" y="420" font-size="12" fill="#000" textLength="42.5" lengthAdjust="spacingAndGlyphs">Ревизия</text>
<rect x="676" y="246" width="1075" height="1" fill="#a0a0a0"/>
<rect x="676" y="246" width="1" height="804" fill="#a0a0a0"/>
<rect x="676" y="1049" width="1075" height="1" fill="#a0a0a0"/>
<rect x="1750" y="246" width="1" height="804" fill="#a0a0a0"/>
<rect x="677" y="247" width="1073" height="1" fill="#ffffff"/>
<rect x="677" y="247" width="1" height="802" fill="#ffffff"/>
<text x="683.6" y="273.5" font-size="12" fill="#000" textLength="76.9" lengthAdjust="spacingAndGlyphs">Объединенный</text>
<rect x="767" y="262" width="975" height="15" fill="#ffffff" />
<rect x="1728" y="263" width="13" height="13" fill="#f7f7f7" />
<path d="M1730 267.5 L1738 267.5 L1734 271.5 Z" fill="#000"/>
<text x="768.7" y="273.5" font-size="12" fill="#000" textLength="149.6" lengthAdjust="spacingAndGlyphs">ФСНБ-2022 - Изменения И12</text>
<text x="683.6" y="298.5" font-size="12" fill="#000" textLength="72.6" lengthAdjust="spacingAndGlyphs">По расценкам</text>
<rect x="767" y="287" width="975" height="15" fill="#ffffff" />
<rect x="1728" y="288" width="13" height="13" fill="#f7f7f7" />
<path d="M1730 292.5 L1738 292.5 L1734 296.5 Z" fill="#000"/>
<text x="768.7" y="298.5" font-size="12" fill="#000" textLength="149.6" lengthAdjust="spacingAndGlyphs">ФСНБ-2022 - Изменения И12</text>
<text x="683.6" y="323.5" font-size="12" fill="#000" textLength="64.7" lengthAdjust="spacingAndGlyphs">По машинам</text>
<rect x="767" y="312" width="975" height="15" fill="#ffffff" />
<rect x="1728" y="313" width="13" height="13" fill="#f7f7f7" />
<path d="M1730 317.5 L1738 317.5 L1734 321.5 Z" fill="#000"/>
<text x="768.7" y="323.5" font-size="12" fill="#000" textLength="149.6" lengthAdjust="spacingAndGlyphs">ФСНБ-2022 - Изменения И12</text>
<text x="683.6" y="348.5" font-size="12" fill="#000" textLength="67.0" lengthAdjust="spacingAndGlyphs">По ценникам</text>
<rect x="767" y="337" width="975" height="15" fill="#ffffff" />
<rect x="1728" y="338" width="13" height="13" fill="#f7f7f7" />
<path d="M1730 342.5 L1738 342.5 L1734 346.5 Z" fill="#000"/>
<text x="768.7" y="348.5" font-size="12" fill="#000" textLength="149.6" lengthAdjust="spacingAndGlyphs">ФСНБ-2022 - Изменения И12</text>
<rect x="530" y="1051" width="1221" height="1" fill="#a0a0a0"/>
<rect x="530" y="1051" width="1" height="30" fill="#a0a0a0"/>
<rect x="531" y="1052" width="1220" height="1" fill="#ffffff"/>
<rect x="530" y="1080" width="1221" height="1" fill="#ffffff"/>
<rect x="1750" y="1051" width="1" height="30" fill="#ffffff"/>
<rect x="1558" y="1054" width="93" height="1" fill="#ffffff"/>
<rect x="1558" y="1054" width="1" height="25" fill="#ffffff"/>
<rect x="1558" y="1078" width="93" height="1" fill="#696969"/>
<rect x="1650" y="1054" width="1" height="25" fill="#696969"/>
<rect x="1559" y="1077" width="91" height="1" fill="#a0a0a0"/>
<rect x="1649" y="1055" width="1" height="23" fill="#a0a0a0"/>
<text x="1576" y="1071" font-size="12" fill="#a0a0a0" textLength="56.8" lengthAdjust="spacingAndGlyphs">Применить</text>
<rect x="1576" y="1073" width="8" height="1" fill="#a0a0a0"/>
<rect x="1653" y="1054" width="94" height="1" fill="#ffffff"/>
<rect x="1653" y="1054" width="1" height="25" fill="#ffffff"/>
<rect x="1653" y="1078" width="94" height="1" fill="#696969"/>
<rect x="1746" y="1054" width="1" height="25" fill="#696969"/>
<rect x="1654" y="1077" width="92" height="1" fill="#a0a0a0"/>
<rect x="1745" y="1055" width="1" height="23" fill="#a0a0a0"/>
<text x="1680" y="1071" font-size="12" fill="#a0a0a0" textLength="39.5" lengthAdjust="spacingAndGlyphs">Отмена</text>
<rect x="1680" y="1073" width="9" height="1" fill="#a0a0a0"/>
<rect x="2" y="1086" width="1754" height="1" fill="#ffffff"/>
<rect x="4" y="1089" width="86" height="1" fill="#a0a0a0"/>
<rect x="4" y="1089" width="1" height="26" fill="#a0a0a0"/>
<rect x="4" y="1115" width="86" height="1" fill="#ffffff"/>
<rect x="89" y="1089" width="1" height="27" fill="#ffffff"/>
<rect x="92" y="1089" width="299" height="1" fill="#a0a0a0"/>
<rect x="92" y="1089" width="1" height="26" fill="#a0a0a0"/>
<rect x="92" y="1115" width="299" height="1" fill="#ffffff"/>
<rect x="390" y="1089" width="1" height="27" fill="#ffffff"/>
<rect x="393" y="1089" width="1293" height="1" fill="#a0a0a0"/>
<rect x="393" y="1089" width="1" height="26" fill="#a0a0a0"/>
<rect x="393" y="1115" width="1293" height="1" fill="#ffffff"/>
<rect x="1685" y="1089" width="1" height="27" fill="#ffffff"/>
<rect x="1689" y="1089" width="31" height="1" fill="#a0a0a0"/>
<rect x="1689" y="1089" width="1" height="26" fill="#a0a0a0"/>
<rect x="1689" y="1115" width="31" height="1" fill="#ffffff"/>
<rect x="1719" y="1089" width="1" height="27" fill="#ffffff"/>
<rect x="1723" y="1089" width="32" height="1" fill="#a0a0a0"/>
<rect x="1723" y="1089" width="1" height="26" fill="#a0a0a0"/>
<rect x="1723" y="1115" width="32" height="1" fill="#ffffff"/>
<rect x="1754" y="1089" width="1" height="27" fill="#ffffff"/>
<text x="1730" y="1106" font-size="12" fill="#000">RU</text>
<rect x="1696" y="1094" width="16" height="16" rx="6" fill="#9a9a9a"/>
<rect x="1703" y="1097" width="2" height="2" fill="#ffffff" />
<rect x="1703" y="1100" width="2" height="7" fill="#ffffff" />
<path d="M1696.5 1094.5 L1711.5 1109.5" stroke="#ff0000" stroke-width="2"/>
<rect x="174" y="231" width="336" height="612" fill="#f0f0f0" />
<rect x="174" y="231" width="336" height="1" fill="#a0a0a0"/>
<rect x="174" y="842" width="336" height="1" fill="#a0a0a0"/>
<rect x="174" y="231" width="1" height="612" fill="#a0a0a0"/>
<rect x="509" y="231" width="1" height="612" fill="#a0a0a0"/>
<text x="199" y="249" font-size="12" fill="#a0a0a0" font-weight="bold">Открыть</text>
<text x="199" y="270" font-size="12" fill="#000">Найти объект</text>
<rect x="178" y="280" width="329" height="1" fill="#a0a0a0"/>
<rect x="178" y="281" width="329" height="1" fill="#ffffff"/>
<text x="199" y="299" font-size="12" fill="#000">Открыть справочник конъюнктурного анализа...</text>
<rect x="178" y="309" width="329" height="1" fill="#a0a0a0"/>
<rect x="178" y="310" width="329" height="1" fill="#ffffff"/>
<text x="199" y="328" font-size="12" fill="#000">Добавить</text>
<path d="M496 319.5 L500.5 323.5 L496 327.5 Z" fill="#000"/>
<text x="199" y="349" font-size="12" fill="#000">Переименовать</text>
<text x="199" y="370" font-size="12" fill="#000">Пересчитать объект в другую базу...</text>
<text x="199" y="391" font-size="12" fill="#000">Групповые операции ...</text>
<rect x="178" y="401" width="329" height="1" fill="#a0a0a0"/>
<rect x="178" y="402" width="329" height="1" fill="#ffffff"/>
<text x="199" y="420" font-size="12" fill="#000">Объединение смет...</text>
<path d="M182 415 L186 410 L190 415 v3 h-8 z" fill="#ffffff" stroke="#a8a8a8" stroke-width="0.8"/>
<path d="M181 415 L186 409 L191 415" fill="none" stroke="#a04010" stroke-width="1.2"/>
<rect x="184" y="416" width="1.5" height="2" fill="#e0a040" />
<rect x="187" y="415" width="2" height="2" fill="#80b0f0" />
<path d="M179.5 419 L182.5 416 L185.5 419 v3.5 h-6 z" fill="#ffffff" stroke="#a8a8a8" stroke-width="0.8"/>
<path d="M178.5 419.5 L182.5 415.5 L186.5 419.5" fill="none" stroke="#a04010" stroke-width="1.1"/>
<rect x="182" y="420" width="1.5" height="2.5" fill="#e0a040" />
<path d="M187.5 419 L190.5 416 L193.5 419 v3.5 h-6 z" fill="#ffffff" stroke="#a8a8a8" stroke-width="0.8"/>
<path d="M186.5 419.5 L190.5 415.5 L194.5 419.5" fill="none" stroke="#a04010" stroke-width="1.1"/>
<rect x="190" y="420" width="1.5" height="2.5" fill="#e0a040" />
<text x="199" y="441" font-size="12" fill="#000">Создать объединенный акт...</text>
<rect x="178" y="451" width="329" height="1" fill="#a0a0a0"/>
<rect x="178" y="452" width="329" height="1" fill="#ffffff"/>
<text x="199" y="470" font-size="12" fill="#000">Сравнить сметы...</text>
<text x="199" y="491" font-size="12" fill="#a0a0a0">Экспертиза акта...</text>
<rect x="178" y="501" width="329" height="1" fill="#a0a0a0"/>
<rect x="178" y="502" width="329" height="1" fill="#ffffff"/>
<text x="199" y="520" font-size="12" fill="#000">Удалить</text>
<path d="M181 511 L190 520 M190 511 L181 520" stroke="#e84030" stroke-width="1.6"/>
<text x="496" y="520" font-size="12" fill="#000" text-anchor="end">Ctrl+Del</text>
<text x="199" y="541" font-size="12" fill="#a0a0a0">Восстановить</text>
<rect x="178" y="551" width="329" height="1" fill="#a0a0a0"/>
<rect x="178" y="552" width="329" height="1" fill="#ffffff"/>
<text x="199" y="570" font-size="12" fill="#a0a0a0">Переместить вверх</text>
<text x="199" y="591" font-size="12" fill="#a0a0a0">Переместить вниз</text>
<rect x="178" y="601" width="329" height="1" fill="#a0a0a0"/>
<rect x="178" y="602" width="329" height="1" fill="#ffffff"/>
<text x="199" y="620" font-size="12" fill="#a0a0a0">Копировать элемент структуры</text>
<text x="496" y="620" font-size="12" fill="#a0a0a0" text-anchor="end">Ctrl+C</text>
<text x="199" y="641" font-size="12" fill="#a0a0a0">Вставить элемент структуры</text>
<text x="496" y="641" font-size="12" fill="#a0a0a0" text-anchor="end">Ctrl+V</text>
<rect x="178" y="651" width="329" height="1" fill="#a0a0a0"/>
<rect x="178" y="652" width="329" height="1" fill="#ffffff"/>
<text x="199" y="670" font-size="12" fill="#000">Создать копию объекта</text>
<rect x="178" y="680" width="329" height="1" fill="#a0a0a0"/>
<rect x="178" y="681" width="329" height="1" fill="#ffffff"/>
<text x="199" y="699" font-size="12" fill="#000">Скопировать остатки выполнения в новый объект</text>
<rect x="178" y="709" width="329" height="1" fill="#a0a0a0"/>
<rect x="178" y="710" width="329" height="1" fill="#ffffff"/>
<text x="199" y="728" font-size="12" fill="#000">Обновить</text>
<path d="M180 723 a5 5 0 0 1 9 -3 M190 723 a5 5 0 0 1 -9 3" stroke="#2a9a2a" stroke-width="2" fill="none"/>
<path d="M187 717 L191 720 L187 722 Z M183 729 L179 726 L183 724 Z" fill="#2a9a2a"/>
<rect x="178" y="738" width="329" height="1" fill="#a0a0a0"/>
<rect x="178" y="739" width="329" height="1" fill="#ffffff"/>
<text x="199" y="757" font-size="12" fill="#000">Экспорт</text>
<path d="M496 748.5 L500.5 752.5 L496 756.5 Z" fill="#000"/>
<path d="M180.5 747.5 l3 -3 h7 v15 h-10 z" fill="#fafafa" stroke="#a0a0a0" stroke-width="1"/>
<path d="M188 756 h5 M191 753.5 l2.5 2.5 l-2.5 2.5" stroke="#1e78e0" stroke-width="1.8" fill="none"/>
<rect x="197" y="763" width="309" height="21" fill="#0078d7" />
<rect x="177" y="763" width="19" height="1" fill="#ffffff"/>
<rect x="177" y="763" width="1" height="21" fill="#ffffff"/>
<rect x="177" y="783" width="19" height="1" fill="#a0a0a0"/>
<rect x="195" y="763" width="1" height="21" fill="#a0a0a0"/>
<path d="M183.5 768.5 l3 -3 h7 v15 h-10 z" fill="#fafafa" stroke="#a0a0a0" stroke-width="1"/>
<path d="M179 776 h6 M183 773.5 l2.5 2.5 l-2.5 2.5" stroke="#1e78e0" stroke-width="1.8" fill="none"/>
<text x="199" y="778" font-size="12" fill="#ffffff">Импорт</text>
<path d="M496 769.5 L500.5 773.5 L496 777.5 Z" fill="#ffffff"/>
<rect x="178" y="788" width="329" height="1" fill="#a0a0a0"/>
<rect x="178" y="789" width="329" height="1" fill="#ffffff"/>
<text x="199" y="807" font-size="12" fill="#000">Настроить это меню...</text>
<rect x="178" y="817" width="329" height="1" fill="#a0a0a0"/>
<rect x="178" y="818" width="329" height="1" fill="#ffffff"/>
<text x="199" y="836" font-size="12" fill="#000">Вид</text>
<path d="M496 827.5 L500.5 831.5 L496 835.5 Z" fill="#000"/>
<rect x="504" y="760" width="331" height="277" fill="#f0f0f0" />
<rect x="504" y="760" width="331" height="1" fill="#a0a0a0"/>
<rect x="504" y="1036" width="331" height="1" fill="#a0a0a0"/>
<rect x="504" y="760" width="1" height="277" fill="#a0a0a0"/>
<rect x="834" y="760" width="1" height="277" fill="#a0a0a0"/>
<text x="529" y="778" font-size="12" fill="#000">Объектов (.sob/.sobx)</text>
<rect x="508" y="788" width="324" height="1" fill="#a0a0a0"/>
<rect x="508" y="789" width="324" height="1" fill="#ffffff"/>
<text x="529" y="807" font-size="12" fill="#000">Объекта в формате XML</text>
<rect x="508" y="817" width="324" height="1" fill="#a0a0a0"/>
<rect x="508" y="818" width="324" height="1" fill="#ffffff"/>
<text x="529" y="836" font-size="12" fill="#000">Акта (.sac/.sacx)</text>
<rect x="504" y="839" width="332" height="29" fill="#e8101a" />
<rect x="507" y="842" width="326" height="22" fill="#0078d7" />
<text x="529" y="857" font-size="12" fill="#ffffff">Акта в формате XML</text>
<rect x="508" y="867" width="324" height="1" fill="#a0a0a0"/>
<rect x="508" y="868" width="324" height="1" fill="#ffffff"/>
<text x="529" y="886" font-size="12" fill="#000">КС-3 в формате XML</text>
<rect x="508" y="896" width="324" height="1" fill="#a0a0a0"/>
<rect x="508" y="897" width="324" height="1" fill="#ffffff"/>
<text x="529" y="915" font-size="12" fill="#000">Локальной сметы (.slsx)</text>
<text x="529" y="936" font-size="12" fill="#000">Локальной сметы в формате XML</text>
<text x="529" y="957" font-size="12" fill="#000">Локальной сметы со структурой проекта (.spxml)</text>
<rect x="508" y="967" width="324" height="1" fill="#a0a0a0"/>
<rect x="508" y="968" width="324" height="1" fill="#ffffff"/>
<text x="529" y="986" font-size="12" fill="#000">Из АРПС</text>
<text x="529" y="1007" font-size="12" fill="#000">Из &quot;ГРАНД-Смета&quot; (базисно-индексный метод)</text>
<text x="529" y="1028" font-size="12" fill="#000">Из &quot;ГРАНД-Смета&quot; (ресурсный метод)</text></svg></body></html>
